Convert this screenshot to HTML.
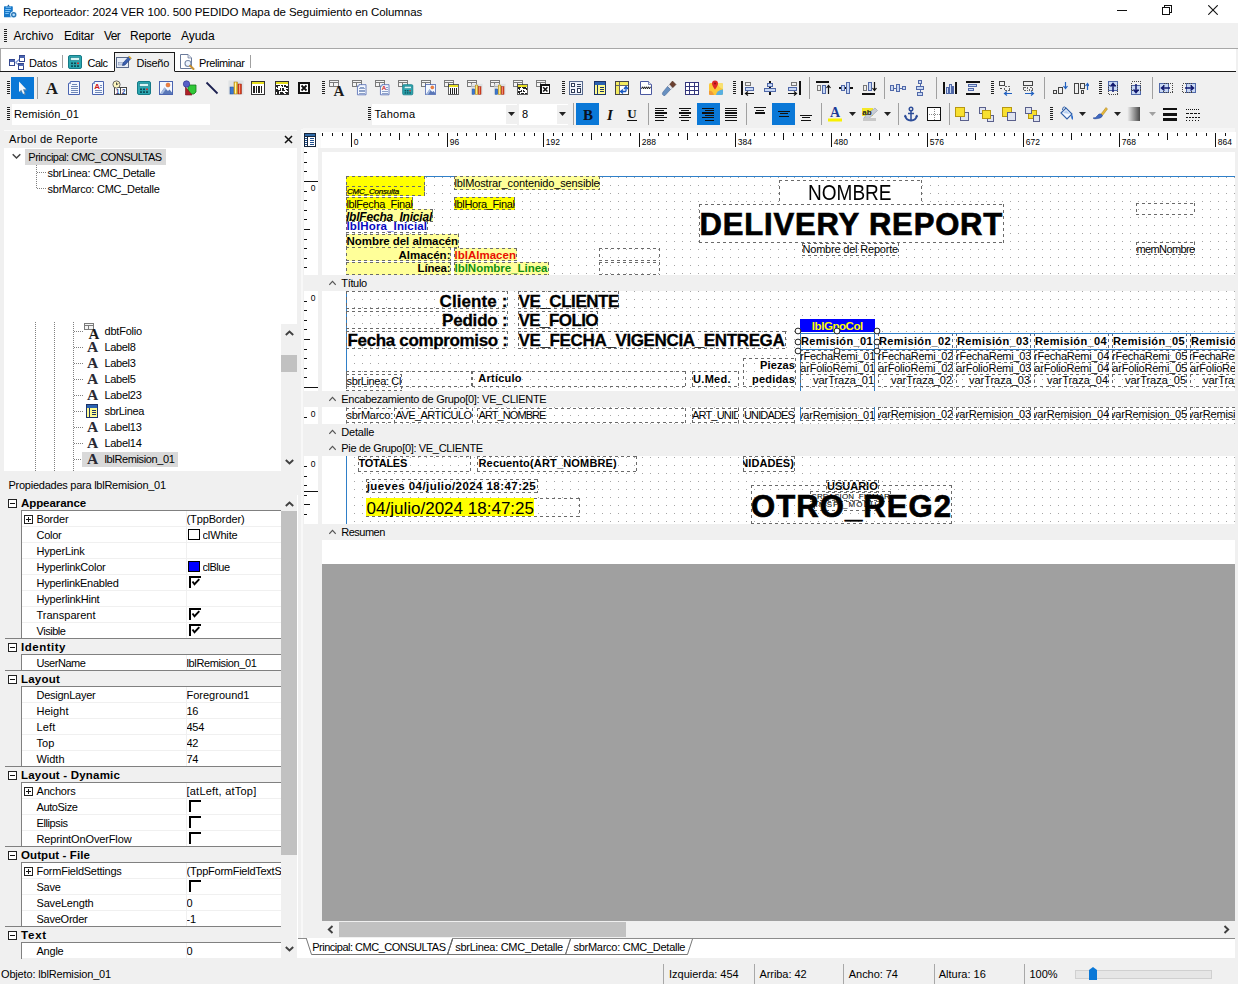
<!DOCTYPE html>
<html><head><meta charset="utf-8"><title>Reporteador</title><style>
html,body{margin:0;padding:0}
body{width:1238px;height:984px;overflow:hidden;position:relative;background:#f0f0f0;font-family:"Liberation Sans",sans-serif;font-size:11px;color:#000}
div,svg,span.t{position:absolute}
span.t{white-space:nowrap;line-height:1}
.b{font-weight:bold}.hv{-webkit-text-stroke:0.7px #000}.hv2{-webkit-text-stroke:0.3px #000}.i{font-style:italic}
.d{--c:#6a6a6a;background-image:repeating-linear-gradient(90deg,var(--c) 0 3px,transparent 3px 6px),repeating-linear-gradient(90deg,var(--c) 0 3px,transparent 3px 6px),repeating-linear-gradient(180deg,var(--c) 0 3px,transparent 3px 6px),repeating-linear-gradient(180deg,var(--c) 0 3px,transparent 3px 6px);background-size:100% 1px,100% 1px,1px 100%,1px 100%;background-position:0 0,0 100%,0 0,100% 0;background-repeat:no-repeat}
.grid{background-image:linear-gradient(90deg,#a4a4a4 1px,transparent 1px);background-size:8px 8px;-webkit-mask-image:linear-gradient(180deg,#000 1px,transparent 1px);-webkit-mask-size:8px 8px;mask-image:linear-gradient(180deg,#000 1px,transparent 1px);mask-size:8px 8px}
</style></head><body>
<div style="left:0px;top:0px;width:1238px;height:23px;background:#fff;"></div>
<svg style="left:3px;top:4px;" width="15" height="14" viewBox="0 0 15 14"><rect x="1" y="2.3" width="8.8" height="11" rx="0.6" fill="#1878c8"/><path d="M3.5 3.2L5.400 0.600L7.300 3.200Z" fill="#155a9a"/><rect x="2.800" y="2.600" width="5.200" height="1" fill="#8fd0ff"/><g fill="#7cc4fa"><rect x="2.300" y="5" width="5.500" height="1"/><rect x="2.300" y="7" width="4.500" height="1"/><rect x="2.300" y="9" width="3.500" height="1"/></g><circle cx="10.700" cy="10.800" r="3.500" fill="#eefaff"/><circle cx="10.700" cy="10.800" r="2" fill="#bfe4ff" stroke="#2a78b8" stroke-width="1.400"/></svg>
<span class="t" style="left:23px;top:7px;font-size:11.5px;color:#000;letter-spacing:-0.07px">Reporteador: 2024 VER 100. 500 PEDIDO Mapa de Seguimiento en Columnas</span>
<div style="left:1117px;top:10px;width:10px;height:1px;background:#111;"></div>
<svg style="left:1161px;top:4px;" width="12" height="12" viewBox="0 0 12 12"><g fill="none" stroke="#111" shape-rendering="crispEdges"><path d="M3.5 3.5V1.5H10.5V8.5H8.5"/><rect x="1.5" y="3.5" width="7" height="7"/></g></svg>
<svg style="left:1208px;top:5px;" width="10" height="10" viewBox="0 0 10 10"><path d="M0.3 0.3L9.7 9.7M9.7 0.3L0.3 9.7" stroke="#111" stroke-width="1.1" fill="none"/></svg>
<div style="left:0px;top:23px;width:1238px;height:25px;background:#f0f0f0;"></div>
<div style="left:4px;top:29px;width:3px;height:14px;background:repeating-linear-gradient(#222 0 1px,transparent 1px 2px);"></div>
<span class="t" style="left:13.5px;top:30px;font-size:12px;letter-spacing:-0.00px">Archivo</span>
<span class="t" style="left:64px;top:30px;font-size:12px;letter-spacing:-0.23px">Editar</span>
<span class="t" style="left:104px;top:30px;font-size:12px;letter-spacing:-0.67px">Ver</span>
<span class="t" style="left:130px;top:30px;font-size:12px;letter-spacing:-0.24px">Reporte</span>
<span class="t" style="left:181px;top:30px;font-size:12px;letter-spacing:-0.06px">Ayuda</span>
<div style="left:0px;top:48px;width:1238px;height:24px;background:#fff;border-top:1px solid #a8a8a8;border-left:1px solid #a8a8a8;box-sizing:border-box;"></div>
<div style="left:0px;top:71px;width:1238px;height:1px;background:#1a1a1a;"></div>
<div style="left:114px;top:52px;width:61px;height:20px;background:#f0f0f0;border:1px solid #1a1a1a;border-bottom:1px solid #f0f0f0;box-sizing:border-box;"></div>
<div style="left:1236px;top:49px;width:2px;height:23px;background:#f0f0f0;"></div>
<svg style="left:9px;top:54px;" width="16" height="16" viewBox="0 0 16 16"><path d="M6.5 8.5L11 5M6.5 8.500L10.5 11.500" stroke="#7a94d0" stroke-width="1.2" fill="none"/><g shape-rendering="crispEdges" fill="#fff" stroke="#33478f"><rect x="0.5" y="5.5" width="5" height="6"/><rect x="10.5" y="1.5" width="5" height="6"/><rect x="9.5" y="9.500" width="5" height="6"/></g><g shape-rendering="crispEdges" fill="#4a64b0"><rect x="1" y="6" width="5" height="2"/><rect x="11" y="2" width="5" height="2"/><rect x="10" y="10" width="5" height="2"/></g></svg>
<span class="t" style="left:29px;top:58px;letter-spacing:-0.15px">Datos</span>
<div style="left:62px;top:55px;width:1px;height:13px;background:#a0a0a0;"></div>
<svg style="left:67px;top:54px;" width="16" height="16" viewBox="0 0 16 16"><rect x="1.5" y="1.5" width="13" height="13" rx="1.5" fill="#2ba6b0" stroke="#157a86"/><rect x="3.5" y="3.5" width="9" height="3" fill="#d8f4f4" stroke="#157a86" stroke-width=".6"/><g fill="#0c4a55"><rect x="4" y="8.5" width="2" height="1.6"/><rect x="7" y="8.5" width="2" height="1.6"/><rect x="4" y="11.3" width="2" height="1.6"/><rect x="7" y="11.3" width="2" height="1.6"/></g><rect x="10" y="8.5" width="2" height="1.6" fill="#d03030"/><rect x="10" y="11.3" width="2" height="1.6" fill="#0c4a55"/></svg>
<span class="t" style="left:87.5px;top:58px;letter-spacing:-0.50px">Calc</span>
<svg style="left:116px;top:54px;" width="16" height="16" viewBox="0 0 16 16"><rect x="0.5" y="3.5" width="12" height="10" fill="#e8eef8" stroke="#5a6a8a"/><rect x="2.5" y="8.5" width="6" height="2.5" fill="#c8d4ea" stroke="#8090b0" stroke-width=".5"/><path d="M7 9L13 2.5L15 4.5L9 11L6.5 11.5Z" fill="#3a5fb0" stroke="#1f3a78" stroke-width=".6"/><path d="M13 2.5L15 4.5" stroke="#e8b020" stroke-width="1.6"/></svg>
<span class="t" style="left:136.5px;top:58px;letter-spacing:-0.29px">Diseño</span>
<svg style="left:179px;top:54px;" width="16" height="16" viewBox="0 0 16 16"><path d="M1.5 0.5H9L12.5 4V14.5H1.5Z" fill="#fff" stroke="#6a7a9a"/><path d="M9 0.5V4H12.5" fill="#dde4f0" stroke="#6a7a9a" stroke-width=".7"/><circle cx="9" cy="9.5" r="3" fill="#e4f0ff" fill-opacity=".7" stroke="#7a8aa8" stroke-width="1.1"/><path d="M11.2 11.8L14.5 15" stroke="#c89030" stroke-width="2" stroke-linecap="round"/></svg>
<span class="t" style="left:199px;top:58px;letter-spacing:-0.40px">Preliminar</span>
<div style="left:250px;top:55px;width:1px;height:13px;background:#a0a0a0;"></div>
<div style="left:0px;top:72px;width:1238px;height:57px;background:#f0f0f0;"></div>
<div style="left:7px;top:81px;width:3px;height:13px;background:repeating-linear-gradient(#222 0 1px,transparent 1px 2px);"></div>
<div style="left:11px;top:77px;width:23px;height:22px;background:#0a78d7;"></div>
<svg style="left:14px;top:80px;" width="16" height="16" viewBox="0 0 16 16"><path d="M5 1.5V12L7.3 9.8L9 14L10.6 13.3L9 9.3H12.2Z" fill="#7a8a9a" opacity=".7" transform="translate(1.2,1.2)"/><path d="M5 1.5V12L7.3 9.8L9 14L10.6 13.3L9 9.3H12.2Z" fill="#f4f8fc"/></svg>
<div style="left:37px;top:77px;width:1px;height:22px;background:#a0a0a0;"></div>
<svg style="left:44px;top:80px;" width="16" height="16" viewBox="0 0 16 16"><text x="8" y="14" font-family="Liberation Serif" font-weight="bold" font-size="17" text-anchor="middle" fill="#1a1a1a">A</text></svg>
<svg style="left:66px;top:80px;" width="16" height="16" viewBox="0 0 16 16"><path d="M4.5 1.5H13.5V14.5H2.5V3.5Z" fill="#f4f8ff" stroke="#4a64b0"/><path d="M2.5 3.5H4.5V1.5" fill="#cfdcf4" stroke="#4a64b0" stroke-width=".7"/><g stroke="#7088b8" shape-rendering="crispEdges"><path d="M6 4.5H11M4.5 6.5H12M4.5 8.5H12M4.5 10.5H12M4.5 12.5H12"/></g></svg>
<svg style="left:90px;top:80px;" width="16" height="16" viewBox="0 0 16 16"><path d="M4.5 1.5H13.5V14.5H2.5V3.5Z" fill="#f4f8ff" stroke="#4a64b0"/><path d="M2.5 3.5H4.5V1.5" fill="#cfdcf4" stroke="#4a64b0" stroke-width=".7"/><text x="7.2" y="8.6" font-family="Liberation Sans" font-weight="bold" font-size="8" text-anchor="middle" fill="#d01818">A</text><g stroke="#7088b8" shape-rendering="crispEdges"><path d="M10 5.5H12M10 7.5H12M4.5 10.5H12M4.5 12.5H12"/></g></svg>
<svg style="left:112px;top:80px;" width="16" height="16" viewBox="0 0 16 16"><g shape-rendering="crispEdges"><rect x="2.5" y="7.5" width="6" height="7" fill="#fff" stroke="#444"/><rect x="8.5" y="7.5" width="6" height="7" fill="#fff" stroke="#444"/></g><text x="5.5" y="13.6" font-family="Liberation Sans" font-weight="bold" font-size="6.5" text-anchor="middle" fill="#23408e">1</text><text x="11.5" y="13.6" font-family="Liberation Sans" font-weight="bold" font-size="6.5" text-anchor="middle" fill="#23408e">2</text><circle cx="4.5" cy="4.5" r="3.6" fill="#fff8c0" stroke="#555" stroke-width=".9"/><path d="M4.5 2.5V4.8L6.3 3.6" fill="none" stroke="#333" stroke-width=".9"/></svg>
<svg style="left:136px;top:80px;" width="16" height="16" viewBox="0 0 16 16"><rect x="1.5" y="1.5" width="13" height="13" rx="1.5" fill="#2ba6b0" stroke="#157a86"/><rect x="3.5" y="3.5" width="9" height="3" fill="#d8f4f4" stroke="#157a86" stroke-width=".6"/><g fill="#0c4a55"><rect x="4" y="8.5" width="2" height="1.6"/><rect x="7" y="8.5" width="2" height="1.6"/><rect x="4" y="11.3" width="2" height="1.6"/><rect x="7" y="11.3" width="2" height="1.6"/></g><rect x="10" y="8.5" width="2" height="1.6" fill="#d03030"/><rect x="10" y="11.3" width="2" height="1.6" fill="#0c4a55"/></svg>
<svg style="left:158px;top:80px;" width="16" height="16" viewBox="0 0 16 16"><rect x="1.5" y="1.5" width="13" height="13" fill="#f4f8ff" stroke="#4a64b0" shape-rendering="crispEdges"/><circle cx="10" cy="5" r="2" fill="#f08040" stroke="#c85820" stroke-width=".5"/><path d="M2 14L6.5 7.5L10 11L11.5 9.5L14 12.5V14Z" fill="#5a78b8"/><path d="M2 14L6.5 7.5L8 9L4.5 14Z" fill="#a8bce0"/></svg>
<svg style="left:182px;top:80px;" width="16" height="16" viewBox="0 0 16 16"><path d="M6 5H14V12L12 14H6Z" fill="#30c838" stroke="#187820" stroke-width=".8"/><path d="M3.5 7V15H10Z" fill="#b02028" stroke="#701018" stroke-width=".6"/><circle cx="4.5" cy="4" r="3.2" fill="#5860c8" stroke="#303890" stroke-width=".7"/></svg>
<svg style="left:204px;top:80px;" width="16" height="16" viewBox="0 0 16 16"><path d="M2.5 2.5L13.5 13.5" stroke="#1c2050" stroke-width="1.8"/></svg>
<svg style="left:228px;top:80px;" width="16" height="16" viewBox="0 0 16 16"><rect x="0.5" y="0.5" width="15" height="14" fill="#d4d8dc" opacity=".6"/><rect x="2" y="7" width="3.5" height="7" fill="#3c78d0" stroke="#1c4890" stroke-width=".5"/><rect x="6" y="2" width="3.5" height="12" fill="#e8c030" stroke="#a07810" stroke-width=".5"/><rect x="10" y="4" width="3.5" height="10" fill="#d84020" stroke="#902010" stroke-width=".5"/><rect x="7" y="2.5" width="1" height="11" fill="#fff4b0"/><rect x="11" y="4.5" width="1" height="9" fill="#f8a080"/></svg>
<svg style="left:250px;top:80px;" width="16" height="16" viewBox="0 0 16 16"><g shape-rendering="crispEdges"><rect x="1.5" y="1.5" width="13" height="13" fill="#fff" stroke="#333"/><rect x="2" y="2" width="12" height="2" fill="#e8e020"/><path d="M4 6V13M6.5 6V13M9 6V13M11.5 6V13" stroke="#222" stroke-width="1.4"/></g></svg>
<svg style="left:274px;top:80px;" width="16" height="16" viewBox="0 0 16 16"><g shape-rendering="crispEdges"><rect x="1.5" y="1.5" width="13" height="13" fill="#fff" stroke="#333"/><rect x="2" y="2" width="12" height="2" fill="#e8e020"/><path d="M2 5H6V6H4V8H3V7H2ZM7 5H9V7H8V6H7ZM10 5H12V6H14V8H12V7H10ZM2 9H4V10H6V8H7V11H5V12H2ZM8 8H10V10H11V11H8ZM12 9H14V11H13V10H12ZM3 12H5V14H3ZM6 12H9V13H10V14H6ZM11 12H14V14H12V13H11Z" fill="#222"/></g></svg>
<svg style="left:296px;top:80px;" width="16" height="16" viewBox="0 0 16 16"><g shape-rendering="crispEdges"><rect x="3" y="3" width="10" height="10" fill="#fff" stroke="#111" stroke-width="1.6"/></g><path d="M5.5 5.5L10.5 10.5M10.5 5.5L5.5 10.5" stroke="#111" stroke-width="1.8"/></svg>
<div style="left:322px;top:81px;width:3px;height:13px;background:repeating-linear-gradient(#222 0 1px,transparent 1px 2px);"></div>
<svg style="left:329px;top:80px;" width="16" height="16" viewBox="0 0 16 16"><g shape-rendering="crispEdges" fill="#f4f4f4" stroke="#7a7a7a"><rect x="0.5" y="0.5" width="9" height="6"/><path d="M0.5 2.5H9.5M4.5 2.5V6.5" fill="none"/></g><text x="10" y="15.5" font-family="Liberation Serif" font-weight="bold" font-size="15" text-anchor="middle" fill="#1a1a1a">A</text></svg>
<svg style="left:352px;top:80px;" width="16" height="16" viewBox="0 0 16 16"><g shape-rendering="crispEdges" fill="#f4f4f4" stroke="#7a7a7a"><rect x="0.5" y="0.5" width="9" height="6"/><path d="M0.5 2.5H9.5M4.5 2.5V6.5" fill="none"/></g><g transform="translate(3.5,3.5) scale(0.78)"><path d="M4.5 1.5H13.5V14.5H2.5V3.5Z" fill="#f4f8ff" stroke="#4a64b0"/><path d="M2.5 3.5H4.5V1.5" fill="#cfdcf4" stroke="#4a64b0" stroke-width=".7"/><g stroke="#7088b8" shape-rendering="crispEdges"><path d="M6 4.5H11M4.5 6.5H12M4.5 8.5H12M4.5 10.5H12M4.5 12.5H12"/></g></g></svg>
<svg style="left:375px;top:80px;" width="16" height="16" viewBox="0 0 16 16"><g shape-rendering="crispEdges" fill="#f4f4f4" stroke="#7a7a7a"><rect x="0.5" y="0.5" width="9" height="6"/><path d="M0.5 2.5H9.5M4.5 2.5V6.5" fill="none"/></g><g transform="translate(3.5,3.5) scale(0.78)"><path d="M4.5 1.5H13.5V14.5H2.5V3.5Z" fill="#f4f8ff" stroke="#4a64b0"/><path d="M2.5 3.5H4.5V1.5" fill="#cfdcf4" stroke="#4a64b0" stroke-width=".7"/><text x="7.2" y="8.6" font-family="Liberation Sans" font-weight="bold" font-size="8" text-anchor="middle" fill="#d01818">A</text><g stroke="#7088b8" shape-rendering="crispEdges"><path d="M10 5.5H12M10 7.5H12M4.5 10.5H12M4.5 12.5H12"/></g></g></svg>
<svg style="left:398px;top:80px;" width="16" height="16" viewBox="0 0 16 16"><g shape-rendering="crispEdges" fill="#f4f4f4" stroke="#7a7a7a"><rect x="0.5" y="0.5" width="9" height="6"/><path d="M0.5 2.5H9.5M4.5 2.5V6.5" fill="none"/></g><g transform="translate(3.5,3.5) scale(0.78)"><rect x="1.5" y="1.5" width="13" height="13" rx="1.5" fill="#2ba6b0" stroke="#157a86"/><rect x="3.5" y="3.5" width="9" height="3" fill="#d8f4f4" stroke="#157a86" stroke-width=".6"/><g fill="#0c4a55"><rect x="4" y="8.5" width="2" height="1.6"/><rect x="7" y="8.5" width="2" height="1.6"/><rect x="4" y="11.3" width="2" height="1.6"/><rect x="7" y="11.3" width="2" height="1.6"/></g><rect x="10" y="8.5" width="2" height="1.6" fill="#d03030"/><rect x="10" y="11.3" width="2" height="1.6" fill="#0c4a55"/></g></svg>
<svg style="left:421px;top:80px;" width="16" height="16" viewBox="0 0 16 16"><g shape-rendering="crispEdges" fill="#f4f4f4" stroke="#7a7a7a"><rect x="0.5" y="0.5" width="9" height="6"/><path d="M0.5 2.5H9.5M4.5 2.5V6.5" fill="none"/></g><g transform="translate(3.5,3.5) scale(0.78)"><rect x="1.5" y="1.5" width="13" height="13" fill="#f4f8ff" stroke="#4a64b0" shape-rendering="crispEdges"/><circle cx="10" cy="5" r="2" fill="#f08040" stroke="#c85820" stroke-width=".5"/><path d="M2 14L6.5 7.5L10 11L11.5 9.5L14 12.5V14Z" fill="#5a78b8"/><path d="M2 14L6.5 7.5L8 9L4.5 14Z" fill="#a8bce0"/></g></svg>
<svg style="left:444px;top:80px;" width="16" height="16" viewBox="0 0 16 16"><g shape-rendering="crispEdges" fill="#f4f4f4" stroke="#7a7a7a"><rect x="0.5" y="0.5" width="9" height="6"/><path d="M0.5 2.5H9.5M4.5 2.5V6.5" fill="none"/></g><g transform="translate(3.5,3.5) scale(0.78)"><g shape-rendering="crispEdges"><rect x="1.5" y="1.5" width="13" height="13" fill="#fff" stroke="#333"/><rect x="2" y="2" width="12" height="2" fill="#e8e020"/><path d="M4 6V13M6.5 6V13M9 6V13M11.5 6V13" stroke="#222" stroke-width="1.4"/></g></g></svg>
<svg style="left:467px;top:80px;" width="16" height="16" viewBox="0 0 16 16"><g shape-rendering="crispEdges" fill="#f4f4f4" stroke="#7a7a7a"><rect x="0.5" y="0.5" width="9" height="6"/><path d="M0.5 2.5H9.5M4.5 2.5V6.5" fill="none"/></g><g transform="translate(3.5,3.5) scale(0.78)"><rect x="0.5" y="0.5" width="15" height="14" fill="#d4d8dc" opacity=".6"/><rect x="2" y="7" width="3.5" height="7" fill="#3c78d0" stroke="#1c4890" stroke-width=".5"/><rect x="6" y="2" width="3.5" height="12" fill="#e8c030" stroke="#a07810" stroke-width=".5"/><rect x="10" y="4" width="3.5" height="10" fill="#d84020" stroke="#902010" stroke-width=".5"/><rect x="7" y="2.5" width="1" height="11" fill="#fff4b0"/><rect x="11" y="4.5" width="1" height="9" fill="#f8a080"/></g></svg>
<svg style="left:490px;top:80px;" width="16" height="16" viewBox="0 0 16 16"><g shape-rendering="crispEdges" fill="#f4f4f4" stroke="#7a7a7a"><rect x="0.5" y="0.5" width="9" height="6"/><path d="M0.5 2.5H9.5M4.5 2.5V6.5" fill="none"/></g><g transform="translate(3.5,3.5) scale(0.78)"><rect x="0.5" y="0.5" width="15" height="14" fill="#d4d8dc" opacity=".6"/><rect x="2" y="7" width="3.5" height="7" fill="#3c78d0" stroke="#1c4890" stroke-width=".5"/><rect x="6" y="2" width="3.5" height="12" fill="#e8c030" stroke="#a07810" stroke-width=".5"/><rect x="10" y="4" width="3.5" height="10" fill="#d84020" stroke="#902010" stroke-width=".5"/><rect x="7" y="2.5" width="1" height="11" fill="#fff4b0"/><rect x="11" y="4.5" width="1" height="9" fill="#f8a080"/></g></svg>
<svg style="left:513px;top:80px;" width="16" height="16" viewBox="0 0 16 16"><g shape-rendering="crispEdges" fill="#f4f4f4" stroke="#7a7a7a"><rect x="0.5" y="0.5" width="9" height="6"/><path d="M0.5 2.5H9.5M4.5 2.5V6.5" fill="none"/></g><g transform="translate(3.5,3.5) scale(0.78)"><g shape-rendering="crispEdges"><rect x="1.5" y="1.5" width="13" height="13" fill="#fff" stroke="#333"/><rect x="2" y="2" width="12" height="2" fill="#e8e020"/><path d="M2 5H6V6H4V8H3V7H2ZM7 5H9V7H8V6H7ZM10 5H12V6H14V8H12V7H10ZM2 9H4V10H6V8H7V11H5V12H2ZM8 8H10V10H11V11H8ZM12 9H14V11H13V10H12ZM3 12H5V14H3ZM6 12H9V13H10V14H6ZM11 12H14V14H12V13H11Z" fill="#222"/></g></g></svg>
<svg style="left:536px;top:80px;" width="16" height="16" viewBox="0 0 16 16"><g shape-rendering="crispEdges" fill="#f4f4f4" stroke="#7a7a7a"><rect x="0.5" y="0.5" width="9" height="6"/><path d="M0.5 2.5H9.5M4.5 2.5V6.5" fill="none"/></g><g transform="translate(2.5,2.5) scale(0.85)"><g shape-rendering="crispEdges"><rect x="3" y="3" width="10" height="10" fill="#fff" stroke="#111" stroke-width="1.6"/></g><path d="M5.5 5.5L10.5 10.5M10.5 5.5L5.5 10.5" stroke="#111" stroke-width="1.8"/></g></svg>
<div style="left:562px;top:81px;width:3px;height:13px;background:repeating-linear-gradient(#222 0 1px,transparent 1px 2px);"></div>
<svg style="left:568px;top:80px;" width="16" height="16" viewBox="0 0 16 16"><g shape-rendering="crispEdges"><rect x="1.5" y="1.5" width="13" height="13" fill="#eef2fa" stroke="#56688c"/><g fill="#fff" stroke="#303c58"><rect x="3.5" y="3.5" width="3" height="3"/><rect x="3.5" y="9.5" width="3" height="3"/><rect x="9.5" y="8.5" width="3" height="4"/></g><path d="M8.5 4.5H12.5M8.5 6.5H12.5" stroke="#303c58"/></g></svg>
<svg style="left:592px;top:80px;" width="16" height="16" viewBox="0 0 16 16"><g shape-rendering="crispEdges" transform="translate(2,1)"><rect x="0.5" y="0.5" width="11" height="13" fill="#fffc90" stroke="#1c3468"/><rect x="1" y="1" width="10" height="3" fill="#2c62b0"/><path d="M3.5 4V13" stroke="#1c3468"/><path d="M5.500 6.500H10M5.500 8.500H10M5.500 10.500H10" stroke="#1c3468"/></g></svg>
<svg style="left:614px;top:80px;" width="16" height="16" viewBox="0 0 16 16"><g shape-rendering="crispEdges"><rect x="1.5" y="1.5" width="13" height="13" fill="#fff" stroke="#444"/><rect x="2" y="2" width="12" height="3" fill="#f4ec60"/><rect x="2" y="2" width="3" height="12" fill="#f4ec60"/><path d="M5.5 2V14M2 5.5H14" stroke="#666"/></g><path d="M7 11.5H12M12 11.5V7M10 9L12 6.5L14 9M9 9.5L6.5 11.5L9 13.5" fill="none" stroke="#1858c0" stroke-width="1.3"/></svg>
<svg style="left:638px;top:80px;" width="16" height="16" viewBox="0 0 16 16"><path d="M2.5 1.5H10.5L13.5 4.5V14.5H2.5Z" fill="#fff" stroke="#4a58a0"/><path d="M10.5 1.500V4.500H13.500" fill="#dde4f0" stroke="#4a58a0" stroke-width=".7"/><path d="M3.500 8.800L4.500 6.800L5.500 8.800L6.500 6.800L7.500 8.800L8.500 6.800L9.500 8.800L10.500 6.800L11.500 8.800L12.500 6.800" fill="none" stroke="#111" stroke-width="1"/></svg>
<svg style="left:661px;top:80px;" width="16" height="16" viewBox="0 0 16 16"><path d="M8.5 4.5L11.5 1L15 4.5L11.5 8Z" fill="#6a4030" stroke="#482818" stroke-width=".5"/><path d="M6.5 6.5L8.5 4.5L11.5 8L9.5 9.5Z" fill="#e8e8ec" stroke="#9098a8" stroke-width=".5"/><path d="M6.5 6.5L9.5 9.5L4 15.5Q2.5 16 1.5 14.5Q1 13 2 12Z" fill="#6890c0" stroke="#406090" stroke-width=".5"/></svg>
<svg style="left:684px;top:80px;" width="16" height="16" viewBox="0 0 16 16"><g shape-rendering="crispEdges"><rect x="1.5" y="2.5" width="13" height="12" fill="#fff" stroke="#34367c"/><path d="M5.5 2.5V14.500M10.5 2.500V14.500M1.500 6.500H14.500M1.500 10.500H14.500" stroke="#34367c" fill="none"/></g></svg>
<svg style="left:708px;top:80px;" width="16" height="16" viewBox="0 0 16 16"><rect x="1" y="3" width="14" height="12" rx="1.5" fill="#fcc838"/><path d="M9 3H13.5Q15 3 15 4.5V9Q11 8 9 3Z" fill="#f8e070"/><path d="M8 15Q9 10 15 9.5V13.5Q15 15 13.5 15Z" fill="#58b0e0"/><path d="M1 11Q4 10 6 15H2.5Q1 15 1 13.5Z" fill="#f09838"/><path d="M7 0.5A3 3 0 0 1 10 3.5Q10 5.5 7 9.5Q4 5.5 4 3.5A3 3 0 0 1 7 0.5Z" fill="#e02828"/><circle cx="7" cy="3.5" r="1" fill="#901010"/></svg>
<div style="left:733px;top:81px;width:3px;height:13px;background:repeating-linear-gradient(#222 0 1px,transparent 1px 2px);"></div>
<svg style="left:740px;top:80px;" width="16" height="16" viewBox="0 0 16 16"><g shape-rendering="crispEdges"><rect x="1" y="1" width="2" height="14" fill="#111"/><rect x="5.5" y="2.5" width="5" height="3" fill="#eee" stroke="#777"/><rect x="5.5" y="7.5" width="8" height="3" fill="#c8d8f4" stroke="#5068a8"/></g><path d="M14 13.5H6M8 11.5L5.5 13.5L8 15.5" fill="none" stroke="#111" stroke-width="1.2"/></svg>
<svg style="left:762px;top:80px;" width="16" height="16" viewBox="0 0 16 16"><g shape-rendering="crispEdges"><path d="M8 1V15" stroke="#111" stroke-width="2"/><rect x="5.5" y="3.5" width="5" height="3" fill="#c8d8f4" stroke="#5068a8"/><rect x="2.5" y="8.5" width="11" height="3" fill="#c8d8f4" stroke="#5068a8"/></g></svg>
<svg style="left:786px;top:80px;" width="16" height="16" viewBox="0 0 16 16"><g shape-rendering="crispEdges"><rect x="13" y="1" width="2" height="14" fill="#111"/><rect x="5.5" y="2.5" width="5" height="3" fill="#eee" stroke="#777"/><rect x="2.5" y="7.5" width="8" height="3" fill="#c8d8f4" stroke="#5068a8"/></g><path d="M2 13.5H10M8 11.5L10.5 13.5L8 15.5" fill="none" stroke="#111" stroke-width="1.2"/></svg>
<div style="left:809px;top:77px;width:1px;height:22px;background:#a0a0a0;"></div>
<svg style="left:815px;top:80px;" width="16" height="16" viewBox="0 0 16 16"><g shape-rendering="crispEdges"><rect x="1" y="1" width="13" height="2" fill="#111"/><rect x="2.5" y="5.5" width="3" height="5" fill="#eee" stroke="#777"/><rect x="7.5" y="5.5" width="3" height="8" fill="#c8d8f4" stroke="#5068a8"/></g><path d="M13.5 14V6M11.5 8L13.5 5.5L15.5 8" fill="none" stroke="#111" stroke-width="1.2"/></svg>
<svg style="left:838px;top:80px;" width="16" height="16" viewBox="0 0 16 16"><g shape-rendering="crispEdges"><path d="M1 8H15" stroke="#111" stroke-width="2"/><rect x="3.5" y="5.5" width="3" height="5" fill="#c8d8f4" stroke="#5068a8"/><rect x="8.5" y="2.5" width="3" height="11" fill="#c8d8f4" stroke="#5068a8"/></g></svg>
<svg style="left:861px;top:80px;" width="16" height="16" viewBox="0 0 16 16"><g shape-rendering="crispEdges"><rect x="1" y="13" width="13" height="2" fill="#111"/><rect x="2.5" y="5.5" width="3" height="5" fill="#eee" stroke="#777"/><rect x="7.5" y="2.5" width="3" height="8" fill="#c8d8f4" stroke="#5068a8"/></g><path d="M13.5 2V10M11.5 8L13.5 10.5L15.5 8" fill="none" stroke="#111" stroke-width="1.2"/></svg>
<div style="left:884px;top:77px;width:1px;height:22px;background:#a0a0a0;"></div>
<svg style="left:890px;top:80px;" width="16" height="16" viewBox="0 0 16 16"><g shape-rendering="crispEdges"><path d="M1 8H15" stroke="#5068a8"/><rect x="0.5" y="5.5" width="3" height="5" fill="#c8d8f4" stroke="#5068a8"/><rect x="6.500" y="4.5" width="3" height="7" fill="#c8d8f4" stroke="#5068a8"/><rect x="12.5" y="6.5" width="3" height="3" fill="#c8d8f4" stroke="#5068a8"/></g></svg>
<svg style="left:912px;top:80px;" width="16" height="16" viewBox="0 0 16 16"><g shape-rendering="crispEdges"><path d="M8 1V15" stroke="#5068a8"/><rect x="6.5" y="0.5" width="3" height="3" fill="#c8d8f4" stroke="#5068a8"/><rect x="4.5" y="6.5" width="7" height="3" fill="#c8d8f4" stroke="#5068a8"/><rect x="5.5" y="12.5" width="5" height="3" fill="#c8d8f4" stroke="#5068a8"/></g></svg>
<div style="left:936px;top:77px;width:1px;height:22px;background:#a0a0a0;"></div>
<svg style="left:942px;top:80px;" width="16" height="16" viewBox="0 0 16 16"><g shape-rendering="crispEdges"><rect x="1" y="2" width="2" height="12" fill="#111"/><rect x="13" y="2" width="2" height="12" fill="#111"/><rect x="4.500" y="7.5" width="2" height="6" fill="#c8d8f4" stroke="#5068a8"/><rect x="7.5" y="4.5" width="2" height="9" fill="#c8d8f4" stroke="#5068a8"/><rect x="10.5" y="6.5" width="1" height="7" fill="#c8d8f4" stroke="#5068a8"/></g></svg>
<svg style="left:965px;top:80px;" width="16" height="16" viewBox="0 0 16 16"><g shape-rendering="crispEdges"><rect x="1" y="1" width="14" height="2" fill="#111"/><rect x="1" y="13" width="14" height="2" fill="#111"/><rect x="3.500" y="4.5" width="8" height="2" fill="#c8d8f4" stroke="#5068a8"/><rect x="3.5" y="8.5" width="5" height="2" fill="#c8d8f4" stroke="#5068a8"/></g></svg>
<div style="left:991px;top:81px;width:3px;height:13px;background:repeating-linear-gradient(#222 0 1px,transparent 1px 2px);"></div>
<svg style="left:998px;top:80px;" width="16" height="16" viewBox="0 0 16 16"><g shape-rendering="crispEdges" fill="none"><rect x="1.5" y="1.5" width="5" height="4" stroke="#444"/><rect x="6.5" y="6.5" width="5" height="4" stroke="#666" stroke-dasharray="2 1"/></g><path d="M14 13.500H7M9 11.5L6.500 13.5L9 15.500" fill="none" stroke="#2060c0" stroke-width="1.2"/><path d="M2 8.500H4" stroke="#444"/></svg>
<svg style="left:1021px;top:80px;" width="16" height="16" viewBox="0 0 16 16"><g shape-rendering="crispEdges" fill="none"><rect x="2.5" y="1.5" width="9" height="4" stroke="#444"/><rect x="2.5" y="7.5" width="4" height="3" stroke="#666" stroke-dasharray="2 1"/><rect x="8.5" y="7.5" width="3" height="3" stroke="#666" stroke-dasharray="2 1"/></g><path d="M4 13.500H12M10 11.5L12.500 13.5L10 15.500" fill="none" stroke="#2060c0" stroke-width="1.2"/></svg>
<div style="left:1044px;top:77px;width:1px;height:22px;background:#a0a0a0;"></div>
<svg style="left:1052px;top:80px;" width="16" height="16" viewBox="0 0 16 16"><g shape-rendering="crispEdges" fill="none" stroke="#444"><rect x="1.5" y="10.5" width="3" height="3"/><rect x="6.5" y="7.5" width="4" height="6"/></g><path d="M13.500 2V8M11.5 6L13.5 8.500L15.500 6" fill="none" stroke="#2060c0" stroke-width="1.2"/></svg>
<svg style="left:1073px;top:80px;" width="16" height="16" viewBox="0 0 16 16"><g shape-rendering="crispEdges" fill="none" stroke="#444"><rect x="1.5" y="3.5" width="4" height="10"/><rect x="7.5" y="3.5" width="4" height="5"/><rect x="8.5" y="10.5" width="2" height="3"/></g><path d="M14.500 10V4M12.5 6L14.5 3.500L16 6" fill="none" stroke="#2060c0" stroke-width="1.2"/></svg>
<div style="left:1099px;top:81px;width:3px;height:13px;background:repeating-linear-gradient(#222 0 1px,transparent 1px 2px);"></div>
<svg style="left:1105px;top:80px;" width="16" height="16" viewBox="0 0 16 16"><g shape-rendering="crispEdges"><rect x="3.5" y="1.5" width="9" height="9" fill="#c8d8f4" stroke="#5068a8"/><rect x="3.5" y="5.5" width="9" height="9" fill="none" stroke="#444" stroke-dasharray="1 1"/></g><path d="M8 12V4M5.500 6.500L8 3.500L10.500 6.500" fill="none" stroke="#101870" stroke-width="1.5"/></svg>
<svg style="left:1128px;top:80px;" width="16" height="16" viewBox="0 0 16 16"><g shape-rendering="crispEdges"><rect x="3.5" y="5.5" width="9" height="9" fill="#c8d8f4" stroke="#5068a8"/><rect x="3.5" y="1.5" width="9" height="9" fill="none" stroke="#444" stroke-dasharray="1 1"/></g><path d="M8 4V12M5.500 9.500L8 12.500L10.500 9.500" fill="none" stroke="#101870" stroke-width="1.5"/></svg>
<div style="left:1152px;top:77px;width:1px;height:22px;background:#a0a0a0;"></div>
<svg style="left:1158px;top:80px;" width="16" height="16" viewBox="0 0 16 16"><g shape-rendering="crispEdges"><rect x="1.5" y="3.5" width="9" height="9" fill="#c8d8f4" stroke="#5068a8"/><rect x="5.5" y="3.5" width="9" height="9" fill="none" stroke="#444" stroke-dasharray="1 1"/></g><path d="M12 8H4M6.500 5.500L3.500 8L6.500 10.500" fill="none" stroke="#101870" stroke-width="1.5"/></svg>
<svg style="left:1181px;top:80px;" width="16" height="16" viewBox="0 0 16 16"><g shape-rendering="crispEdges"><rect x="5.5" y="3.5" width="9" height="9" fill="#c8d8f4" stroke="#5068a8"/><rect x="1.5" y="3.5" width="9" height="9" fill="none" stroke="#444" stroke-dasharray="1 1"/></g><path d="M4 8H12M9.500 5.500L12.500 8L9.500 10.500" fill="none" stroke="#101870" stroke-width="1.5"/></svg>
<div style="left:7px;top:107px;width:3px;height:13px;background:repeating-linear-gradient(#222 0 1px,transparent 1px 2px);"></div>
<div style="left:12px;top:104px;width:198px;height:21px;background:#fff;"></div>
<span class="t" style="left:14px;top:109px;letter-spacing:0.07px">Remisión_01</span>
<div style="left:368px;top:107px;width:3px;height:13px;background:repeating-linear-gradient(#222 0 1px,transparent 1px 2px);"></div>
<div style="left:372px;top:104px;width:145px;height:21px;background:#fff;"></div>
<div style="left:506px;top:105px;width:11px;height:19px;background:#f0f0f0;"></div>
<span class="t" style="left:374.5px;top:109px;letter-spacing:0.28px">Tahoma</span>
<svg style="left:508px;top:112px;" width="7" height="4" viewBox="0 0 7 4"><path d="M0 0H7L3.5 4Z" fill="#222"/></svg>
<div style="left:519px;top:104px;width:49px;height:21px;background:#fff;"></div>
<div style="left:557px;top:105px;width:11px;height:19px;background:#f0f0f0;"></div>
<span class="t" style="left:522px;top:109px;">8</span>
<svg style="left:559px;top:112px;" width="7" height="4" viewBox="0 0 7 4"><path d="M0 0H7L3.5 4Z" fill="#222"/></svg>
<div style="left:573px;top:103px;width:1px;height:22px;background:#a0a0a0;"></div>
<div style="left:576px;top:103px;width:23px;height:22px;background:#0a78d7;"></div>
<svg style="left:580px;top:106px;" width="16" height="16" viewBox="0 0 16 16"><text x="8" y="13.5" font-family="Liberation Serif" font-weight="bold" font-size="15" text-anchor="middle" fill="#0a1020">B</text></svg>
<svg style="left:602px;top:106px;" width="16" height="16" viewBox="0 0 16 16"><text x="8" y="13.5" font-family="Liberation Serif" font-weight="bold" font-style="italic" font-size="15" text-anchor="middle" fill="#111">I</text></svg>
<svg style="left:624px;top:106px;" width="16" height="16" viewBox="0 0 16 16"><text x="8" y="12" font-family="Liberation Serif" font-weight="bold" font-size="13" text-anchor="middle" fill="#111">U</text><rect x="3" y="14" width="10" height="1" fill="#111"/></svg>
<div style="left:648px;top:103px;width:1px;height:22px;background:#a0a0a0;"></div>
<svg style="left:653px;top:106px;" width="16" height="16" viewBox="0 0 16 16"><g shape-rendering="crispEdges" fill="#111"><rect x="2" y="1.5" width="12" height="1.3"/><rect x="2" y="3.9" width="9" height="1.3"/><rect x="2" y="6.3" width="12" height="1.3"/><rect x="2" y="8.7" width="9" height="1.3"/><rect x="2" y="11.1" width="12" height="1.3"/><rect x="2" y="13.5" width="9" height="1.3"/></g></svg>
<svg style="left:677px;top:106px;" width="16" height="16" viewBox="0 0 16 16"><g shape-rendering="crispEdges" fill="#111"><rect x="2.0" y="1.5" width="12" height="1.3"/><rect x="4.0" y="3.9" width="8" height="1.3"/><rect x="2.0" y="6.3" width="12" height="1.3"/><rect x="4.0" y="8.7" width="8" height="1.3"/><rect x="2.0" y="11.1" width="12" height="1.3"/><rect x="4.0" y="13.5" width="8" height="1.3"/></g></svg>
<div style="left:697px;top:103px;width:23px;height:22px;background:#0a78d7;"></div>
<svg style="left:700px;top:106px;" width="16" height="16" viewBox="0 0 16 16"><g shape-rendering="crispEdges" fill="#111"><rect x="2" y="1.5" width="12" height="1.3"/><rect x="5" y="3.9" width="9" height="1.3"/><rect x="2" y="6.3" width="12" height="1.3"/><rect x="5" y="8.7" width="9" height="1.3"/><rect x="2" y="11.1" width="12" height="1.3"/><rect x="5" y="13.5" width="9" height="1.3"/></g></svg>
<svg style="left:723px;top:106px;" width="16" height="16" viewBox="0 0 16 16"><g shape-rendering="crispEdges" fill="#111"><rect x="2" y="1.5" width="12" height="1.3"/><rect x="2" y="3.9" width="12" height="1.3"/><rect x="2" y="6.3" width="12" height="1.3"/><rect x="2" y="8.7" width="12" height="1.3"/><rect x="2" y="11.1" width="12" height="1.3"/><rect x="2" y="13.5" width="12" height="1.3"/></g></svg>
<div style="left:746px;top:103px;width:1px;height:22px;background:#a0a0a0;"></div>
<svg style="left:752px;top:106px;" width="16" height="16" viewBox="0 0 16 16"><g shape-rendering="crispEdges" fill="#111"><rect x="2.0" y="1.0" width="12" height="1.3"/><rect x="4.0" y="3.6" width="8" height="1.3"/><rect x="3.0" y="6.2" width="10" height="1.3"/></g></svg>
<div style="left:772px;top:103px;width:23px;height:22px;background:#0a78d7;"></div>
<svg style="left:776px;top:106px;" width="16" height="16" viewBox="0 0 16 16"><g shape-rendering="crispEdges" fill="#111"><rect x="2.0" y="4.5" width="12" height="1.3"/><rect x="4.0" y="7.1" width="8" height="1.3"/><rect x="3.0" y="9.7" width="10" height="1.3"/></g></svg>
<svg style="left:798px;top:106px;" width="16" height="16" viewBox="0 0 16 16"><g shape-rendering="crispEdges" fill="#111"><rect x="2.0" y="8.5" width="12" height="1.3"/><rect x="4.0" y="11.1" width="8" height="1.3"/><rect x="3.0" y="13.7" width="10" height="1.3"/></g></svg>
<div style="left:821px;top:103px;width:1px;height:22px;background:#a0a0a0;"></div>
<svg style="left:827px;top:106px;" width="16" height="16" viewBox="0 0 16 16"><text x="8" y="11" font-family="Liberation Serif" font-weight="bold" font-size="14" text-anchor="middle" fill="#1c3c98">A</text><rect x="1" y="12.5" width="14" height="3" fill="#f8f000"/></svg>
<svg style="left:849px;top:112px;" width="7" height="4" viewBox="0 0 7 4"><path d="M0 0H7L3.5 4Z" fill="#222"/></svg>
<svg style="left:862px;top:106px;" width="16" height="16" viewBox="0 0 16 16"><rect x="0" y="2" width="11" height="8" fill="#f4e828"/><path d="M2 12L4 9L13 2L15.500 4.500L7 12.500Z" fill="#c8ccd4" stroke="#8890a0" stroke-width=".5"/><text x="5" y="9" font-family="Liberation Sans" font-weight="bold" font-size="8" text-anchor="middle" fill="#222">ab</text><rect x="1" y="12" width="13" height="3" fill="#c8c8c8"/></svg>
<svg style="left:884px;top:112px;" width="7" height="4" viewBox="0 0 7 4"><path d="M0 0H7L3.5 4Z" fill="#222"/></svg>
<div style="left:898px;top:103px;width:1px;height:22px;background:#a0a0a0;"></div>
<svg style="left:903px;top:106px;" width="16" height="16" viewBox="0 0 16 16"><circle cx="8" cy="3" r="1.8" fill="none" stroke="#2c4c98" stroke-width="1.4"/><path d="M8 5V14M5 7.500H11" stroke="#2c4c98" stroke-width="1.5" fill="none"/><path d="M2 9.500Q3 14.500 8 14.500Q13 14.500 14 9.500" fill="none" stroke="#2c4c98" stroke-width="1.8"/><path d="M1 11L2 8.500L4 10.500ZM15 11L14 8.500L12 10.500Z" fill="#2c4c98"/></svg>
<svg style="left:926px;top:106px;" width="16" height="16" viewBox="0 0 16 16"><g shape-rendering="crispEdges"><rect x="1.5" y="1.5" width="13" height="13" fill="#fff" stroke="#111"/><path d="M8.500 3V14M3 8.500H14" stroke="#888" stroke-dasharray="1 1"/></g></svg>
<div style="left:949px;top:103px;width:1px;height:22px;background:#a0a0a0;"></div>
<svg style="left:954px;top:106px;" width="16" height="16" viewBox="0 0 16 16"><g shape-rendering="crispEdges"><rect x="6.5" y="6.5" width="8" height="8" fill="#e0e4f0" stroke="#5a608c"/><rect x="1.5" y="1.5" width="9" height="9" fill="#f8e030" stroke="#b89810"/></g></svg>
<svg style="left:978px;top:106px;" width="16" height="16" viewBox="0 0 16 16"><g shape-rendering="crispEdges"><rect x="1.5" y="1.5" width="6" height="6" fill="#e0e4f0" stroke="#5a608c"/><rect x="9.5" y="9.5" width="6" height="6" fill="#e0e4f0" stroke="#5a608c"/><rect x="4.5" y="4.5" width="8" height="8" fill="#f8e030" stroke="#b89810"/></g></svg>
<svg style="left:1001px;top:106px;" width="16" height="16" viewBox="0 0 16 16"><g shape-rendering="crispEdges"><rect x="1.5" y="1.5" width="9" height="9" fill="#f8e030" stroke="#b89810"/><rect x="6.5" y="6.5" width="8" height="8" fill="#e0e4f0" stroke="#5a608c"/></g></svg>
<svg style="left:1024px;top:106px;" width="16" height="16" viewBox="0 0 16 16"><g shape-rendering="crispEdges"><rect x="4.5" y="4.5" width="8" height="8" fill="#f8e030" stroke="#b89810"/><rect x="1.5" y="1.5" width="6" height="6" fill="#e0e4f0" stroke="#5a608c"/><rect x="9.5" y="9.500" width="6" height="6" fill="#e0e4f0" stroke="#5a608c"/></g></svg>
<div style="left:1050px;top:107px;width:3px;height:13px;background:repeating-linear-gradient(#222 0 1px,transparent 1px 2px);"></div>
<svg style="left:1058px;top:106px;" width="16" height="16" viewBox="0 0 16 16"><path d="M3 7L8 2L14 8L9 13Z" fill="#f4f8ff" stroke="#3060a8" stroke-width="1.1"/><path d="M5 7L8 4L12 8Z" fill="#b8d0f0"/><path d="M8 2Q5 -1 4.500 4" fill="none" stroke="#3060a8"/><path d="M13.500 8Q16 11 14.500 14Q12.500 12 13.500 8Z" fill="#2868c8"/></svg>
<svg style="left:1079px;top:112px;" width="7" height="4" viewBox="0 0 7 4"><path d="M0 0H7L3.5 4Z" fill="#222"/></svg>
<svg style="left:1092px;top:106px;" width="16" height="16" viewBox="0 0 16 16"><path d="M9 8L14 1.500L15.500 3L10.500 9.500Z" fill="#e8b838" stroke="#a07818" stroke-width=".5"/><path d="M5 10Q7 7 9 8L10.500 9.500Q10 12 6 12.500Q2 13.500 1 12Q4 12 5 10Z" fill="#4068c0" stroke="#284890" stroke-width=".5"/></svg>
<svg style="left:1114px;top:112px;" width="7" height="4" viewBox="0 0 7 4"><path d="M0 0H7L3.5 4Z" fill="#222"/></svg>
<svg style="left:1126px;top:106px;" width="16" height="16" viewBox="0 0 16 16"><defs><linearGradient id="gr1"><stop offset="0" stop-color="#f4f4f4"/><stop offset="1" stop-color="#484848"/></linearGradient></defs><rect x="1" y="1" width="13" height="14" fill="url(#gr1)"/></svg>
<svg style="left:1149px;top:112px;" width="7" height="4" viewBox="0 0 7 4"><path d="M0 0H7L3.5 4Z" fill="#a0a0a0"/></svg>
<svg style="left:1162px;top:106px;" width="16" height="16" viewBox="0 0 16 16"><g shape-rendering="crispEdges" fill="#111"><rect x="1" y="2" width="14" height="2"/><rect x="1" y="6.5" width="14" height="3"/><rect x="1" y="12" width="14" height="3"/></g></svg>
<svg style="left:1185px;top:106px;" width="16" height="16" viewBox="0 0 16 16"><g shape-rendering="crispEdges" stroke="#111"><path d="M1 3.500H15" stroke-dasharray="1 1"/><path d="M1 7.500H15" stroke-dasharray="3 1"/><path d="M1 11.500H15" stroke-dasharray="2 1"/><path d="M1 14.500H15" stroke-dasharray="1 2"/></g></svg>
<div style="left:4px;top:130px;width:293px;height:828px;background:#f0f0f0;"></div>
<span class="t" style="left:9px;top:134px;letter-spacing:0.36px">Arbol de Reporte</span>
<div style="left:4px;top:130px;width:293px;height:1px;background:#fafafa;"></div>
<svg style="left:284px;top:135px;" width="9" height="9" viewBox="0 0 9 9"><path d="M1 1L8 8M8 1L1 8" stroke="#111" stroke-width="1.5"/></svg>
<div style="left:4px;top:148px;width:293px;height:323px;background:#fff;"></div>
<svg style="left:12px;top:153px;" width="9" height="7" viewBox="0 0 9 7"><path d="M0.700 1.200L4.500 5L8.300 1.200" fill="none" stroke="#444" stroke-width="1.5"/></svg>
<div style="left:25px;top:149px;width:141px;height:16px;background:#d9d9d9;"></div>
<span class="t" style="left:28.3px;top:152px;letter-spacing:-0.49px">Principal: CMC_CONSULTAS</span>
<span class="t" style="left:47.6px;top:168px;letter-spacing:-0.30px">sbrLinea: CMC_Detalle</span>
<span class="t" style="left:47.6px;top:184px;letter-spacing:-0.26px">sbrMarco: CMC_Detalle</span>
<div style="left:36px;top:165px;width:1px;height:24px;background:repeating-linear-gradient(180deg,#808080 0 1px,transparent 1px 2px);"></div>
<div style="left:37px;top:172px;width:9px;height:1px;background:repeating-linear-gradient(90deg,#808080 0 1px,transparent 1px 2px);"></div>
<div style="left:37px;top:188px;width:9px;height:1px;background:repeating-linear-gradient(90deg,#808080 0 1px,transparent 1px 2px);"></div>
<div style="left:35px;top:322px;width:1px;height:149px;background:repeating-linear-gradient(180deg,#808080 0 1px,transparent 1px 2px);"></div>
<div style="left:54px;top:322px;width:1px;height:149px;background:repeating-linear-gradient(180deg,#808080 0 1px,transparent 1px 2px);"></div>
<div style="left:73px;top:322px;width:1px;height:149px;background:repeating-linear-gradient(180deg,#808080 0 1px,transparent 1px 2px);"></div>
<div style="left:74px;top:331px;width:10px;height:1px;background:repeating-linear-gradient(90deg,#808080 0 1px,transparent 1px 2px);"></div>
<svg style="left:84px;top:323px;" width="16" height="16" viewBox="0 0 16 16"><g shape-rendering="crispEdges" fill="#f4f4f4" stroke="#7a7a7a"><rect x="0.5" y="0.5" width="9" height="6"/><path d="M0.5 2.5H9.5M4.5 2.5V6.5" fill="none"/></g><text x="10" y="15.5" font-family="Liberation Serif" font-weight="bold" font-size="15" text-anchor="middle" fill="#1a1a1a">A</text></svg>
<span class="t" style="left:104.5px;top:326px;letter-spacing:-0.21px">dbtFolio</span>
<div style="left:74px;top:347px;width:10px;height:1px;background:repeating-linear-gradient(90deg,#808080 0 1px,transparent 1px 2px);"></div>
<svg style="left:86px;top:340px;" width="14" height="15" viewBox="0 0 14 15"><text x="6.5" y="12.2" font-family="Liberation Serif" font-weight="bold" font-size="15.5" text-anchor="middle" fill="#2a2a34">A</text></svg>
<span class="t" style="left:104.5px;top:342px;letter-spacing:-0.34px">Label8</span>
<div style="left:74px;top:363px;width:10px;height:1px;background:repeating-linear-gradient(90deg,#808080 0 1px,transparent 1px 2px);"></div>
<svg style="left:86px;top:356px;" width="14" height="15" viewBox="0 0 14 15"><text x="6.5" y="12.2" font-family="Liberation Serif" font-weight="bold" font-size="15.5" text-anchor="middle" fill="#2a2a34">A</text></svg>
<span class="t" style="left:104.5px;top:358px;letter-spacing:-0.34px">Label3</span>
<div style="left:74px;top:379px;width:10px;height:1px;background:repeating-linear-gradient(90deg,#808080 0 1px,transparent 1px 2px);"></div>
<svg style="left:86px;top:372px;" width="14" height="15" viewBox="0 0 14 15"><text x="6.5" y="12.2" font-family="Liberation Serif" font-weight="bold" font-size="15.5" text-anchor="middle" fill="#2a2a34">A</text></svg>
<span class="t" style="left:104.5px;top:374px;letter-spacing:-0.34px">Label5</span>
<div style="left:74px;top:395px;width:10px;height:1px;background:repeating-linear-gradient(90deg,#808080 0 1px,transparent 1px 2px);"></div>
<svg style="left:86px;top:388px;" width="14" height="15" viewBox="0 0 14 15"><text x="6.5" y="12.2" font-family="Liberation Serif" font-weight="bold" font-size="15.5" text-anchor="middle" fill="#2a2a34">A</text></svg>
<span class="t" style="left:104.5px;top:390px;letter-spacing:-0.31px">Label23</span>
<div style="left:74px;top:411px;width:10px;height:1px;background:repeating-linear-gradient(90deg,#808080 0 1px,transparent 1px 2px);"></div>
<svg style="left:86px;top:404px;" width="12" height="14" viewBox="0 0 12 14"><g shape-rendering="crispEdges"><rect x="0.5" y="0.5" width="11" height="13" fill="#fffc90" stroke="#1c3468"/><rect x="1" y="1" width="10" height="3" fill="#2c62b0"/><path d="M3.5 4V13" stroke="#1c3468"/><path d="M5.500 6.500H10M5.500 8.500H10M5.500 10.500H10" stroke="#1c3468"/></g></svg>
<span class="t" style="left:104.5px;top:406px;letter-spacing:-0.34px">sbrLinea</span>
<div style="left:74px;top:427px;width:10px;height:1px;background:repeating-linear-gradient(90deg,#808080 0 1px,transparent 1px 2px);"></div>
<svg style="left:86px;top:420px;" width="14" height="15" viewBox="0 0 14 15"><text x="6.5" y="12.2" font-family="Liberation Serif" font-weight="bold" font-size="15.5" text-anchor="middle" fill="#2a2a34">A</text></svg>
<span class="t" style="left:104.5px;top:422px;letter-spacing:-0.31px">Label13</span>
<div style="left:74px;top:443px;width:10px;height:1px;background:repeating-linear-gradient(90deg,#808080 0 1px,transparent 1px 2px);"></div>
<svg style="left:86px;top:436px;" width="14" height="15" viewBox="0 0 14 15"><text x="6.5" y="12.2" font-family="Liberation Serif" font-weight="bold" font-size="15.5" text-anchor="middle" fill="#2a2a34">A</text></svg>
<span class="t" style="left:104.5px;top:438px;letter-spacing:-0.31px">Label14</span>
<div style="left:74px;top:459px;width:10px;height:1px;background:repeating-linear-gradient(90deg,#808080 0 1px,transparent 1px 2px);"></div>
<div style="left:82px;top:452px;width:96px;height:15px;background:#d9d9d9;"></div>
<svg style="left:86px;top:452px;" width="14" height="15" viewBox="0 0 14 15"><text x="6.5" y="12.2" font-family="Liberation Serif" font-weight="bold" font-size="15.5" text-anchor="middle" fill="#2a2a34">A</text></svg>
<span class="t" style="left:104.5px;top:454px;letter-spacing:-0.37px">lblRemision_01</span>
<div style="left:86px;top:469px;width:14px;height:2px;overflow:hidden;"><svg width="14" height="15" style="left:0;top:0"><text x="6.5" y="12.2" font-family="Liberation Serif" font-weight="bold" font-size="15.5" text-anchor="middle" fill="#2a2a34">A</text></svg></div>
<div style="left:281px;top:324px;width:16px;height:147px;background:#f0f0f0;"></div>
<svg style="left:284.5px;top:330px;" width="9" height="6" viewBox="0 0 9 6"><path d="M0.8 5L4.5 1.5L8.2 5" fill="none" stroke="#404040" stroke-width="1.9"/></svg>
<svg style="left:284.5px;top:459px;" width="9" height="6" viewBox="0 0 9 6"><path d="M0.8 1L4.5 4.500L8.2 1" fill="none" stroke="#404040" stroke-width="1.9"/></svg>
<div style="left:281px;top:355px;width:16px;height:17px;background:#c1c1c1;"></div>
<span class="t" style="left:8.5px;top:480px;letter-spacing:-0.25px">Propiedades para lblRemision_01</span>
<div style="left:5px;top:495px;width:276px;height:463px;background:#fff;"></div>
<div style="left:5px;top:495px;width:16px;height:463px;background:#f0f0f0;"></div>
<div style="left:5px;top:495px;width:276px;height:16px;background:#f0f0f0;"></div>
<div style="left:21px;top:510px;width:260px;height:1px;background:#808080;"></div>
<svg style="left:8px;top:499px;" width="9" height="9" viewBox="0 0 9 9"><g shape-rendering="crispEdges"><rect x="0.500" y="0.500" width="8" height="8" fill="#fff" stroke="#222"/><path d="M2 4.500H7" stroke="#111" fill="none"/></g></svg>
<span class="t b" style="left:21px;top:498px;font-size:11.5px;letter-spacing:-0.08px">Appearance</span>
<div style="left:21px;top:526px;width:260px;height:1px;background:#f0f0f0;"></div>
<svg style="left:24px;top:515px;" width="9" height="9" viewBox="0 0 9 9"><g shape-rendering="crispEdges"><rect x="0.500" y="0.500" width="8" height="8" fill="#fff" stroke="#222"/><path d="M2 4.500H7 M4.500 2V7" stroke="#111" fill="none"/></g></svg>
<span class="t" style="left:36.5px;top:514px;letter-spacing:-0.17px">Border</span>
<div style="left:186.5px;top:511px;width:94.5px;height:15px;overflow:hidden;"><span class="t" style="left:0px;top:3px;letter-spacing:-0.12px">(TppBorder)</span>
</div>
<div style="left:21px;top:542px;width:260px;height:1px;background:#f0f0f0;"></div>
<span class="t" style="left:36.5px;top:530px;letter-spacing:-0.26px">Color</span>
<div style="left:188px;top:529px;width:12px;height:11px;background:#fff;border:1px solid #000;box-sizing:border-box;"></div>
<div style="left:202.5px;top:527px;width:78.5px;height:15px;overflow:hidden;"><span class="t" style="left:0px;top:3px;letter-spacing:-0.15px">clWhite</span>
</div>
<div style="left:21px;top:558px;width:260px;height:1px;background:#f0f0f0;"></div>
<span class="t" style="left:36.5px;top:546px;letter-spacing:-0.17px">HyperLink</span>
<div style="left:21px;top:574px;width:260px;height:1px;background:#f0f0f0;"></div>
<span class="t" style="left:36.5px;top:562px;letter-spacing:-0.22px">HyperlinkColor</span>
<div style="left:188px;top:561px;width:12px;height:11px;background:#0000ff;border:1px solid #000;box-sizing:border-box;"></div>
<div style="left:202.5px;top:559px;width:78.5px;height:15px;overflow:hidden;"><span class="t" style="left:0px;top:3px;letter-spacing:-0.49px">clBlue</span>
</div>
<div style="left:21px;top:590px;width:260px;height:1px;background:#f0f0f0;"></div>
<span class="t" style="left:36.5px;top:578px;letter-spacing:-0.26px">HyperlinkEnabled</span>
<div style="left:189px;top:576px;width:12px;height:12px;background:#fff;border-top:2px solid #000;border-left:2px solid #000;box-sizing:border-box;"></div>
<svg style="left:191px;top:578px;" width="10" height="9" viewBox="0 0 10 9"><path d="M1.500 3.500L3.500 6.200L8.300 1.200" fill="none" stroke="#000" stroke-width="1.900"/></svg>
<div style="left:21px;top:606px;width:260px;height:1px;background:#f0f0f0;"></div>
<span class="t" style="left:36.5px;top:594px;letter-spacing:-0.19px">HyperlinkHint</span>
<div style="left:21px;top:622px;width:260px;height:1px;background:#f0f0f0;"></div>
<span class="t" style="left:36.5px;top:610px;letter-spacing:0.01px">Transparent</span>
<div style="left:189px;top:608px;width:12px;height:12px;background:#fff;border-top:2px solid #000;border-left:2px solid #000;box-sizing:border-box;"></div>
<svg style="left:191px;top:610px;" width="10" height="9" viewBox="0 0 10 9"><path d="M1.500 3.500L3.500 6.200L8.300 1.200" fill="none" stroke="#000" stroke-width="1.900"/></svg>
<span class="t" style="left:36.5px;top:626px;letter-spacing:-0.46px">Visible</span>
<div style="left:189px;top:624px;width:12px;height:12px;background:#fff;border-top:2px solid #000;border-left:2px solid #000;box-sizing:border-box;"></div>
<svg style="left:191px;top:626px;" width="10" height="9" viewBox="0 0 10 9"><path d="M1.500 3.500L3.500 6.200L8.300 1.200" fill="none" stroke="#000" stroke-width="1.900"/></svg>
<div style="left:5px;top:639px;width:276px;height:16px;background:#f0f0f0;"></div>
<div style="left:5px;top:638px;width:276px;height:1px;background:#808080;"></div>
<div style="left:21px;top:654px;width:260px;height:1px;background:#808080;"></div>
<svg style="left:8px;top:643px;" width="9" height="9" viewBox="0 0 9 9"><g shape-rendering="crispEdges"><rect x="0.500" y="0.500" width="8" height="8" fill="#fff" stroke="#222"/><path d="M2 4.500H7" stroke="#111" fill="none"/></g></svg>
<span class="t b" style="left:21px;top:642px;font-size:11.5px;letter-spacing:0.51px">Identity</span>
<span class="t" style="left:36.5px;top:658px;letter-spacing:-0.45px">UserName</span>
<div style="left:186.5px;top:655px;width:94.5px;height:15px;overflow:hidden;"><span class="t" style="left:0px;top:3px;letter-spacing:-0.37px">lblRemision_01</span>
</div>
<div style="left:5px;top:671px;width:276px;height:16px;background:#f0f0f0;"></div>
<div style="left:5px;top:670px;width:276px;height:1px;background:#808080;"></div>
<div style="left:21px;top:686px;width:260px;height:1px;background:#808080;"></div>
<svg style="left:8px;top:675px;" width="9" height="9" viewBox="0 0 9 9"><g shape-rendering="crispEdges"><rect x="0.500" y="0.500" width="8" height="8" fill="#fff" stroke="#222"/><path d="M2 4.500H7" stroke="#111" fill="none"/></g></svg>
<span class="t b" style="left:21px;top:674px;font-size:11.5px;letter-spacing:0.22px">Layout</span>
<div style="left:21px;top:702px;width:260px;height:1px;background:#f0f0f0;"></div>
<span class="t" style="left:36.5px;top:690px;letter-spacing:-0.25px">DesignLayer</span>
<div style="left:186.5px;top:687px;width:94.5px;height:15px;overflow:hidden;"><span class="t" style="left:0px;top:3px;letter-spacing:0.00px">Foreground1</span>
</div>
<div style="left:21px;top:718px;width:260px;height:1px;background:#f0f0f0;"></div>
<span class="t" style="left:36.5px;top:706px;letter-spacing:0.03px">Height</span>
<div style="left:186.5px;top:703px;width:94.5px;height:15px;overflow:hidden;"><span class="t" style="left:0px;top:3px;letter-spacing:-0.38px">16</span>
</div>
<div style="left:21px;top:734px;width:260px;height:1px;background:#f0f0f0;"></div>
<span class="t" style="left:36.5px;top:722px;letter-spacing:0.16px">Left</span>
<div style="left:186.5px;top:719px;width:94.5px;height:15px;overflow:hidden;"><span class="t" style="left:0px;top:3px;letter-spacing:-0.29px">454</span>
</div>
<div style="left:21px;top:750px;width:260px;height:1px;background:#f0f0f0;"></div>
<span class="t" style="left:36.5px;top:738px;letter-spacing:0.08px">Top</span>
<div style="left:186.5px;top:735px;width:94.5px;height:15px;overflow:hidden;"><span class="t" style="left:0px;top:3px;letter-spacing:-0.38px">42</span>
</div>
<span class="t" style="left:36.5px;top:754px;letter-spacing:-0.03px">Width</span>
<div style="left:186.5px;top:751px;width:94.5px;height:15px;overflow:hidden;"><span class="t" style="left:0px;top:3px;letter-spacing:-0.38px">74</span>
</div>
<div style="left:5px;top:767px;width:276px;height:16px;background:#f0f0f0;"></div>
<div style="left:5px;top:766px;width:276px;height:1px;background:#808080;"></div>
<div style="left:21px;top:782px;width:260px;height:1px;background:#808080;"></div>
<svg style="left:8px;top:771px;" width="9" height="9" viewBox="0 0 9 9"><g shape-rendering="crispEdges"><rect x="0.500" y="0.500" width="8" height="8" fill="#fff" stroke="#222"/><path d="M2 4.500H7" stroke="#111" fill="none"/></g></svg>
<span class="t b" style="left:21px;top:770px;font-size:11.5px;letter-spacing:0.20px">Layout - Dynamic</span>
<div style="left:21px;top:798px;width:260px;height:1px;background:#f0f0f0;"></div>
<svg style="left:24px;top:787px;" width="9" height="9" viewBox="0 0 9 9"><g shape-rendering="crispEdges"><rect x="0.500" y="0.500" width="8" height="8" fill="#fff" stroke="#222"/><path d="M2 4.500H7 M4.500 2V7" stroke="#111" fill="none"/></g></svg>
<span class="t" style="left:36.5px;top:786px;letter-spacing:-0.19px">Anchors</span>
<div style="left:186.5px;top:783px;width:94.5px;height:15px;overflow:hidden;"><span class="t" style="left:0px;top:3px;letter-spacing:0.22px">[atLeft, atTop]</span>
</div>
<div style="left:21px;top:814px;width:260px;height:1px;background:#f0f0f0;"></div>
<span class="t" style="left:36.5px;top:802px;letter-spacing:-0.38px">AutoSize</span>
<div style="left:189px;top:800px;width:12px;height:12px;background:#fff;border-top:2px solid #000;border-left:2px solid #000;box-sizing:border-box;"></div>
<div style="left:21px;top:830px;width:260px;height:1px;background:#f0f0f0;"></div>
<span class="t" style="left:36.5px;top:818px;letter-spacing:-0.40px">Ellipsis</span>
<div style="left:189px;top:816px;width:12px;height:12px;background:#fff;border-top:2px solid #000;border-left:2px solid #000;box-sizing:border-box;"></div>
<span class="t" style="left:36.5px;top:834px;letter-spacing:-0.13px">ReprintOnOverFlow</span>
<div style="left:189px;top:832px;width:12px;height:12px;background:#fff;border-top:2px solid #000;border-left:2px solid #000;box-sizing:border-box;"></div>
<div style="left:5px;top:847px;width:276px;height:16px;background:#f0f0f0;"></div>
<div style="left:5px;top:846px;width:276px;height:1px;background:#808080;"></div>
<div style="left:21px;top:862px;width:260px;height:1px;background:#808080;"></div>
<svg style="left:8px;top:851px;" width="9" height="9" viewBox="0 0 9 9"><g shape-rendering="crispEdges"><rect x="0.500" y="0.500" width="8" height="8" fill="#fff" stroke="#222"/><path d="M2 4.500H7" stroke="#111" fill="none"/></g></svg>
<span class="t b" style="left:21px;top:850px;font-size:11.5px;letter-spacing:0.10px">Output - File</span>
<div style="left:21px;top:878px;width:260px;height:1px;background:#f0f0f0;"></div>
<svg style="left:24px;top:867px;" width="9" height="9" viewBox="0 0 9 9"><g shape-rendering="crispEdges"><rect x="0.500" y="0.500" width="8" height="8" fill="#fff" stroke="#222"/><path d="M2 4.500H7 M4.500 2V7" stroke="#111" fill="none"/></g></svg>
<span class="t" style="left:36.5px;top:866px;letter-spacing:-0.25px">FormFieldSettings</span>
<div style="left:186.5px;top:863px;width:94.5px;height:15px;overflow:hidden;"><span class="t" style="left:0px;top:3px;letter-spacing:-0.26px">(TppFormFieldTextS</span>
</div>
<div style="left:21px;top:894px;width:260px;height:1px;background:#f0f0f0;"></div>
<span class="t" style="left:36.5px;top:882px;letter-spacing:-0.27px">Save</span>
<div style="left:189px;top:880px;width:12px;height:12px;background:#fff;border-top:2px solid #000;border-left:2px solid #000;box-sizing:border-box;"></div>
<div style="left:21px;top:910px;width:260px;height:1px;background:#f0f0f0;"></div>
<span class="t" style="left:36.5px;top:898px;letter-spacing:-0.17px">SaveLength</span>
<div style="left:186.5px;top:895px;width:94.5px;height:15px;overflow:hidden;"><span class="t" style="left:0px;top:3px;letter-spacing:-0.62px">0</span>
</div>
<span class="t" style="left:36.5px;top:914px;letter-spacing:-0.24px">SaveOrder</span>
<div style="left:186.5px;top:911px;width:94.5px;height:15px;overflow:hidden;"><span class="t" style="left:0px;top:3px;letter-spacing:-0.14px">-1</span>
</div>
<div style="left:5px;top:927px;width:276px;height:16px;background:#f0f0f0;"></div>
<div style="left:5px;top:926px;width:276px;height:1px;background:#808080;"></div>
<div style="left:21px;top:942px;width:260px;height:1px;background:#808080;"></div>
<svg style="left:8px;top:931px;" width="9" height="9" viewBox="0 0 9 9"><g shape-rendering="crispEdges"><rect x="0.500" y="0.500" width="8" height="8" fill="#fff" stroke="#222"/><path d="M2 4.500H7" stroke="#111" fill="none"/></g></svg>
<span class="t b" style="left:21px;top:930px;font-size:11.5px;letter-spacing:0.80px">Text</span>
<span class="t" style="left:36.5px;top:946px;letter-spacing:-0.23px">Angle</span>
<div style="left:186.5px;top:943px;width:94.5px;height:15px;overflow:hidden;"><span class="t" style="left:0px;top:3px;letter-spacing:-0.62px">0</span>
</div>
<div style="left:186px;top:511px;width:1px;height:15px;background:#f0f0f0;"></div>
<div style="left:21px;top:511px;width:1px;height:16px;background:#808080;"></div>
<div style="left:186px;top:527px;width:1px;height:15px;background:#f0f0f0;"></div>
<div style="left:21px;top:527px;width:1px;height:16px;background:#808080;"></div>
<div style="left:186px;top:543px;width:1px;height:15px;background:#f0f0f0;"></div>
<div style="left:21px;top:543px;width:1px;height:16px;background:#808080;"></div>
<div style="left:186px;top:559px;width:1px;height:15px;background:#f0f0f0;"></div>
<div style="left:21px;top:559px;width:1px;height:16px;background:#808080;"></div>
<div style="left:186px;top:575px;width:1px;height:15px;background:#f0f0f0;"></div>
<div style="left:21px;top:575px;width:1px;height:16px;background:#808080;"></div>
<div style="left:186px;top:591px;width:1px;height:15px;background:#f0f0f0;"></div>
<div style="left:21px;top:591px;width:1px;height:16px;background:#808080;"></div>
<div style="left:186px;top:607px;width:1px;height:15px;background:#f0f0f0;"></div>
<div style="left:21px;top:607px;width:1px;height:16px;background:#808080;"></div>
<div style="left:186px;top:623px;width:1px;height:15px;background:#f0f0f0;"></div>
<div style="left:21px;top:623px;width:1px;height:16px;background:#808080;"></div>
<div style="left:186px;top:655px;width:1px;height:15px;background:#f0f0f0;"></div>
<div style="left:21px;top:655px;width:1px;height:16px;background:#808080;"></div>
<div style="left:186px;top:687px;width:1px;height:15px;background:#f0f0f0;"></div>
<div style="left:21px;top:687px;width:1px;height:16px;background:#808080;"></div>
<div style="left:186px;top:703px;width:1px;height:15px;background:#f0f0f0;"></div>
<div style="left:21px;top:703px;width:1px;height:16px;background:#808080;"></div>
<div style="left:186px;top:719px;width:1px;height:15px;background:#f0f0f0;"></div>
<div style="left:21px;top:719px;width:1px;height:16px;background:#808080;"></div>
<div style="left:186px;top:735px;width:1px;height:15px;background:#f0f0f0;"></div>
<div style="left:21px;top:735px;width:1px;height:16px;background:#808080;"></div>
<div style="left:186px;top:751px;width:1px;height:15px;background:#f0f0f0;"></div>
<div style="left:21px;top:751px;width:1px;height:16px;background:#808080;"></div>
<div style="left:186px;top:783px;width:1px;height:15px;background:#f0f0f0;"></div>
<div style="left:21px;top:783px;width:1px;height:16px;background:#808080;"></div>
<div style="left:186px;top:799px;width:1px;height:15px;background:#f0f0f0;"></div>
<div style="left:21px;top:799px;width:1px;height:16px;background:#808080;"></div>
<div style="left:186px;top:815px;width:1px;height:15px;background:#f0f0f0;"></div>
<div style="left:21px;top:815px;width:1px;height:16px;background:#808080;"></div>
<div style="left:186px;top:831px;width:1px;height:15px;background:#f0f0f0;"></div>
<div style="left:21px;top:831px;width:1px;height:16px;background:#808080;"></div>
<div style="left:186px;top:863px;width:1px;height:15px;background:#f0f0f0;"></div>
<div style="left:21px;top:863px;width:1px;height:16px;background:#808080;"></div>
<div style="left:186px;top:879px;width:1px;height:15px;background:#f0f0f0;"></div>
<div style="left:21px;top:879px;width:1px;height:16px;background:#808080;"></div>
<div style="left:186px;top:895px;width:1px;height:15px;background:#f0f0f0;"></div>
<div style="left:21px;top:895px;width:1px;height:16px;background:#808080;"></div>
<div style="left:186px;top:911px;width:1px;height:15px;background:#f0f0f0;"></div>
<div style="left:21px;top:911px;width:1px;height:16px;background:#808080;"></div>
<div style="left:186px;top:943px;width:1px;height:15px;background:#f0f0f0;"></div>
<div style="left:21px;top:943px;width:1px;height:16px;background:#808080;"></div>
<div style="left:281px;top:495px;width:16px;height:463px;background:#f0f0f0;"></div>
<svg style="left:284.5px;top:501px;" width="9" height="6" viewBox="0 0 9 6"><path d="M0.8 5L4.5 1.5L8.2 5" fill="none" stroke="#404040" stroke-width="1.9"/></svg>
<svg style="left:284.5px;top:946px;" width="9" height="6" viewBox="0 0 9 6"><path d="M0.8 1L4.5 4.500L8.2 1" fill="none" stroke="#404040" stroke-width="1.9"/></svg>
<div style="left:281px;top:511px;width:16px;height:344px;background:#c1c1c1;"></div>
<div style="left:301px;top:129px;width:2px;height:829px;background:#f8f8f8;"></div>
<div style="left:303px;top:131px;width:18px;height:17px;background:#fafafa;"></div>
<div style="left:303px;top:128px;width:932px;height:4px;background:#f6f6f6;"></div>
<svg style="left:304px;top:133px;" width="12" height="14" viewBox="0 0 12 14"><g shape-rendering="crispEdges"><rect x="0.5" y="0.5" width="11" height="13" fill="#fff" stroke="#16263c"/><rect x="1" y="1" width="10" height="2" fill="#2f6aa8"/><path d="M1 3.500H11M3.500 4V13" stroke="#16263c"/><path d="M1 5.500H3M1 7.500H3M1 9.500H3M1 11.500H3M6 5.500H10M6 7.500H10M6 9.500H10M6 11.500H10" stroke="#1f4f8f"/></g></svg>
<div style="left:321px;top:132px;width:915px;height:16px;background:#fff;"></div>
<svg style="left:320px;top:132px;" width="916" height="16" viewBox="0 0 916 16"><g fill="#111" shape-rendering="crispEdges"><rect x="2" y="1" width="1" height="3"/><rect x="12" y="1" width="1" height="3"/><rect x="22" y="1" width="1" height="3"/><rect x="31" y="1" width="1" height="14"/><rect x="41" y="1" width="1" height="3"/><rect x="50" y="1" width="1" height="3"/><rect x="60" y="1" width="1" height="3"/><rect x="70" y="1" width="1" height="3"/><rect x="79" y="1" width="1" height="7"/><rect x="89" y="1" width="1" height="3"/><rect x="98" y="1" width="1" height="3"/><rect x="108" y="1" width="1" height="3"/><rect x="118" y="1" width="1" height="3"/><rect x="127" y="1" width="1" height="14"/><rect x="137" y="1" width="1" height="3"/><rect x="146" y="1" width="1" height="3"/><rect x="156" y="1" width="1" height="3"/><rect x="166" y="1" width="1" height="3"/><rect x="175" y="1" width="1" height="7"/><rect x="185" y="1" width="1" height="3"/><rect x="194" y="1" width="1" height="3"/><rect x="204" y="1" width="1" height="3"/><rect x="214" y="1" width="1" height="3"/><rect x="223" y="1" width="1" height="14"/><rect x="233" y="1" width="1" height="3"/><rect x="242" y="1" width="1" height="3"/><rect x="252" y="1" width="1" height="3"/><rect x="262" y="1" width="1" height="3"/><rect x="271" y="1" width="1" height="7"/><rect x="281" y="1" width="1" height="3"/><rect x="290" y="1" width="1" height="3"/><rect x="300" y="1" width="1" height="3"/><rect x="310" y="1" width="1" height="3"/><rect x="319" y="1" width="1" height="14"/><rect x="329" y="1" width="1" height="3"/><rect x="338" y="1" width="1" height="3"/><rect x="348" y="1" width="1" height="3"/><rect x="358" y="1" width="1" height="3"/><rect x="367" y="1" width="1" height="7"/><rect x="377" y="1" width="1" height="3"/><rect x="386" y="1" width="1" height="3"/><rect x="396" y="1" width="1" height="3"/><rect x="406" y="1" width="1" height="3"/><rect x="415" y="1" width="1" height="14"/><rect x="425" y="1" width="1" height="3"/><rect x="434" y="1" width="1" height="3"/><rect x="444" y="1" width="1" height="3"/><rect x="454" y="1" width="1" height="3"/><rect x="463" y="1" width="1" height="7"/><rect x="473" y="1" width="1" height="3"/><rect x="482" y="1" width="1" height="3"/><rect x="492" y="1" width="1" height="3"/><rect x="502" y="1" width="1" height="3"/><rect x="511" y="1" width="1" height="14"/><rect x="521" y="1" width="1" height="3"/><rect x="530" y="1" width="1" height="3"/><rect x="540" y="1" width="1" height="3"/><rect x="550" y="1" width="1" height="3"/><rect x="559" y="1" width="1" height="7"/><rect x="569" y="1" width="1" height="3"/><rect x="578" y="1" width="1" height="3"/><rect x="588" y="1" width="1" height="3"/><rect x="598" y="1" width="1" height="3"/><rect x="607" y="1" width="1" height="14"/><rect x="617" y="1" width="1" height="3"/><rect x="626" y="1" width="1" height="3"/><rect x="636" y="1" width="1" height="3"/><rect x="646" y="1" width="1" height="3"/><rect x="655" y="1" width="1" height="7"/><rect x="665" y="1" width="1" height="3"/><rect x="674" y="1" width="1" height="3"/><rect x="684" y="1" width="1" height="3"/><rect x="694" y="1" width="1" height="3"/><rect x="703" y="1" width="1" height="14"/><rect x="713" y="1" width="1" height="3"/><rect x="722" y="1" width="1" height="3"/><rect x="732" y="1" width="1" height="3"/><rect x="742" y="1" width="1" height="3"/><rect x="751" y="1" width="1" height="7"/><rect x="761" y="1" width="1" height="3"/><rect x="770" y="1" width="1" height="3"/><rect x="780" y="1" width="1" height="3"/><rect x="790" y="1" width="1" height="3"/><rect x="799" y="1" width="1" height="14"/><rect x="809" y="1" width="1" height="3"/><rect x="818" y="1" width="1" height="3"/><rect x="828" y="1" width="1" height="3"/><rect x="838" y="1" width="1" height="3"/><rect x="847" y="1" width="1" height="7"/><rect x="857" y="1" width="1" height="3"/><rect x="866" y="1" width="1" height="3"/><rect x="876" y="1" width="1" height="3"/><rect x="886" y="1" width="1" height="3"/><rect x="895" y="1" width="1" height="14"/><rect x="905" y="1" width="1" height="3"/></g></svg>
<span class="t" style="left:353.8px;top:138px;font-size:8.5px;color:#000;letter-spacing:-0.23px">0</span>
<span class="t" style="left:449.8px;top:138px;font-size:8.5px;color:#000;letter-spacing:-0.08px">96</span>
<span class="t" style="left:545.8px;top:138px;font-size:8.5px;color:#000;letter-spacing:-0.06px">192</span>
<span class="t" style="left:641.8px;top:138px;font-size:8.5px;color:#000;letter-spacing:-0.06px">288</span>
<span class="t" style="left:737.8px;top:138px;font-size:8.5px;color:#000;letter-spacing:-0.06px">384</span>
<span class="t" style="left:833.8px;top:138px;font-size:8.5px;color:#000;letter-spacing:-0.06px">480</span>
<span class="t" style="left:929.8px;top:138px;font-size:8.5px;color:#000;letter-spacing:-0.06px">576</span>
<span class="t" style="left:1025.8px;top:138px;font-size:8.5px;color:#000;letter-spacing:-0.06px">672</span>
<span class="t" style="left:1121.8px;top:138px;font-size:8.5px;color:#000;letter-spacing:-0.06px">768</span>
<span class="t" style="left:1217.8px;top:138px;font-size:8.5px;color:#000;letter-spacing:-0.06px">864</span>
<div style="left:322px;top:152px;width:913px;height:124px;background:#fff;"></div>
<div class="grid" style="left:346px;top:177px;width:889px;height:99px;"></div>
<div style="left:346px;top:176px;width:889px;height:1px;background:#2f7fc8;"></div>
<div style="left:304px;top:148px;width:14px;height:127px;background:#fff;"></div>
<svg style="left:304px;top:148px;" width="14" height="127" viewBox="0 0 14 127"><g fill="#111" shape-rendering="crispEdges"><rect x="0" y="4" width="3" height="1"/><rect x="0" y="14" width="3" height="1"/><rect x="0" y="23" width="3" height="1"/><rect x="0" y="33" width="14" height="1"/><rect x="0" y="43" width="3" height="1"/><rect x="0" y="52" width="3" height="1"/><rect x="0" y="62" width="3" height="1"/><rect x="0" y="71" width="3" height="1"/><rect x="0" y="81" width="6" height="1"/><rect x="0" y="91" width="3" height="1"/><rect x="0" y="100" width="3" height="1"/><rect x="0" y="110" width="3" height="1"/><rect x="0" y="119" width="3" height="1"/></g></svg>
<span class="t" style="left:310.8px;top:184px;font-size:8.5px;color:#000;">0</span>
<div class="d" style="left:346px;top:176px;width:79px;height:20px;background-color:#ffff00;"></div>
<div class="d" style="left:346px;top:186px;width:79px;height:10px;"></div>
<span class="t i" style="left:347px;top:188px;font-size:8px;color:#000;-webkit-text-stroke:0.25px #222200;letter-spacing:-0.19px">CMC_Consulta</span>
<div class="d" style="left:454px;top:176px;width:146px;height:14px;background-color:#ffff99;"></div>
<span class="t" style="left:454.5px;top:178px;letter-spacing:-0.12px">lblMostrar_contenido_sensible</span>
<div class="d" style="left:346px;top:197px;width:67px;height:13px;background-color:#ffff00;"></div>
<span class="t" style="left:346.5px;top:199px;letter-spacing:-0.40px">lblFecha_Final</span>
<div class="d" style="left:454px;top:197px;width:61px;height:13px;background-color:#ffff00;"></div>
<span class="t" style="left:454.5px;top:199px;letter-spacing:-0.37px">lblHora_Final</span>
<div class="d" style="left:346px;top:209px;width:87px;height:13px;background-color:#ffff99;"></div>
<div style="left:346px;top:209px;width:87px;height:12px;overflow:hidden;"><span class="t b i" style="left:0px;top:2px;font-size:12px;letter-spacing:-0.21px">lblFecha_Inicial</span></div>
<div class="d" style="left:346px;top:221px;width:82px;height:12px;background-color:#fff;"></div>
<span class="t b" style="left:346.5px;top:221px;font-size:11.5px;color:#0808c0;letter-spacing:0.13px">lblHora_Inicial</span>
<div class="d" style="left:346px;top:234px;width:113px;height:14px;background-color:#ffff99;"></div>
<span class="t b" style="left:346.5px;top:236px;font-size:11.5px;letter-spacing:-0.05px">Nombre del almacén</span>
<div class="d" style="left:346px;top:247px;width:105px;height:14px;background-color:#ffff99;"></div>
<span class="t b" style="right:787.5px;top:250px;font-size:11.5px;letter-spacing:0.03px">Almacén:</span>
<div class="d" style="left:454px;top:248px;width:63px;height:13px;background-color:#ffff99;"></div>
<span class="t b" style="left:454.5px;top:250px;font-size:11.5px;color:#e81000;letter-spacing:0.01px">lblAlmacen</span>
<div class="d" style="left:346px;top:262px;width:105px;height:13px;background-color:#ffff99;"></div>
<span class="t b" style="right:787.5px;top:263px;font-size:11.5px;letter-spacing:-0.15px">Línea:</span>
<div class="d" style="left:454px;top:262px;width:95px;height:13px;background-color:#ffff99;"></div>
<span class="t b" style="left:454.5px;top:263px;font-size:11.5px;color:#109010;letter-spacing:-0.02px">lblNombre_Linea</span>
<div class="d" style="left:599px;top:248px;width:61px;height:13px;"></div>
<div class="d" style="left:599px;top:262px;width:61px;height:13px;"></div>
<div class="d" style="left:779px;top:180px;width:143px;height:25px;background-color:#fff;"></div>
<span class="t" style="left:808px;top:183px;font-size:21.5px;transform:scaleX(0.885);transform-origin:0 0;">NOMBRE</span>
<div class="d" style="left:699px;top:204px;width:305px;height:39px;background-color:#fff;"></div>
<span class="t b hv" style="left:699.5px;top:209px;font-size:31px;letter-spacing:0.83px">DELIVERY REPORT</span>
<div class="d" style="left:802px;top:243px;width:97px;height:13px;"></div>
<span class="t" style="left:802.5px;top:244px;letter-spacing:-0.20px">Nombre del Reporte</span>
<div class="d" style="left:1136px;top:203px;width:59px;height:12px;"></div>
<div class="d" style="left:1136px;top:242px;width:59px;height:13px;"></div>
<span class="t" style="left:1136.5px;top:244px;letter-spacing:-0.62px">memNombre</span>
<div style="left:320px;top:275px;width:918px;height:16px;background:#f0f0f0;"></div>
<svg style="left:329px;top:280px;" width="7" height="6" viewBox="0 0 7 6"><path d="M0.300 4.800L3.500 1.300L6.700 4.800" fill="none" stroke="#555" stroke-width="1.100"/></svg>
<span class="t" style="left:341.3px;top:278px;letter-spacing:-0.34px">Título</span>
<div style="left:322px;top:291px;width:913px;height:100px;background:#fff;"></div>
<div class="grid" style="left:346px;top:291px;width:889px;height:100px;"></div>
<div style="left:304px;top:291px;width:14px;height:100px;background:#fff;"></div>
<svg style="left:304px;top:291px;" width="14" height="100" viewBox="0 0 14 100"><g fill="#111" shape-rendering="crispEdges"><rect x="0" y="10" width="3" height="1"/><rect x="0" y="19" width="3" height="1"/><rect x="0" y="29" width="3" height="1"/><rect x="0" y="38" width="3" height="1"/><rect x="0" y="48" width="6" height="1"/><rect x="0" y="58" width="3" height="1"/><rect x="0" y="67" width="3" height="1"/><rect x="0" y="77" width="3" height="1"/><rect x="0" y="86" width="3" height="1"/><rect x="0" y="96" width="14" height="1"/></g></svg>
<span class="t" style="left:310.8px;top:294px;font-size:8.5px;color:#000;">0</span>
<div style="left:346px;top:291px;width:1px;height:85px;background:#2f7fc8;"></div>
<div class="d" style="left:346px;top:291px;width:162px;height:18px;"></div>
<div class="d" style="left:346px;top:311px;width:162px;height:18px;"></div>
<div class="d" style="left:346px;top:331px;width:162px;height:18px;"></div>
<span class="t b hv2" style="right:730.5px;top:293px;font-size:17px;letter-spacing:0.10px">Cliente :</span>
<span class="t b hv2" style="right:730.5px;top:312px;font-size:17px;letter-spacing:-0.20px">Pedido :</span>
<span class="t b hv2" style="right:730.5px;top:332px;font-size:17px;letter-spacing:-0.35px">Fecha compromiso :</span>
<div class="d" style="left:518px;top:291px;width:101px;height:18px;"></div>
<span class="t b hv2" style="left:518.5px;top:293px;font-size:17px;letter-spacing:-0.44px">VE_CLIENTE</span>
<div class="d" style="left:518px;top:311px;width:80px;height:18px;"></div>
<span class="t b hv2" style="left:518.5px;top:312px;font-size:17px;letter-spacing:-0.57px">VE_FOLIO</span>
<div class="d" style="left:518px;top:331px;width:268px;height:18px;"></div>
<span class="t b hv2" style="left:518.5px;top:332px;font-size:17px;letter-spacing:-0.36px">VE_FECHA_VIGENCIA_ENTREGA</span>
<div class="d" style="left:346px;top:371px;width:126px;height:16px;"></div>
<div class="d" style="left:346px;top:374px;width:56px;height:17px;"></div>
<span class="t" style="left:346.5px;top:376px;letter-spacing:-0.35px">sbrLinea: Cl</span>
<div class="d" style="left:472px;top:371px;width:214px;height:16px;"></div>
<span class="t b" style="left:478.3px;top:373px;letter-spacing:0.24px">Artículo</span>
<div class="d" style="left:692px;top:371px;width:47px;height:16px;"></div>
<span class="t b" style="left:693px;top:374px;letter-spacing:0.32px">U.Med.</span>
<div class="d" style="left:743px;top:358px;width:53px;height:29px;"></div>
<span class="t b" style="right:443px;top:360px;letter-spacing:0.12px">Piezas</span>
<span class="t b" style="right:443px;top:374px;letter-spacing:0.20px">pedidas</span>
<div style="left:800px;top:319px;width:75px;height:13px;background:#0000ff;"></div>
<span class="t b" style="left:811.8px;top:321px;font-size:11.5px;color:#ffff00;letter-spacing:-0.44px">lblGpoCol</span>
<div style="left:800px;top:333px;width:1px;height:58px;background:#2f7fc8;"></div>
<div style="left:874px;top:333px;width:1px;height:58px;background:#2f7fc8;"></div>
<div style="left:800px;top:334px;width:75px;height:16px;overflow:hidden;"><span class="t b" style="left:1px;top:2px;letter-spacing:0.38px">Remisión_01</span></div>
<div class="d" style="left:800px;top:350px;width:75px;height:13px;"></div>
<div style="left:800px;top:350px;width:75px;height:13px;overflow:hidden;"><span class="t " style="right:0px;top:1px;letter-spacing:-0.26px">varFechaRemi_01</span></div>
<div class="d" style="left:800px;top:362px;width:75px;height:13px;"></div>
<div style="left:800px;top:362px;width:75px;height:13px;overflow:hidden;"><span class="t " style="right:0px;top:1px;letter-spacing:-0.21px">varFolioRemi_01</span></div>
<div class="d" style="left:800px;top:374px;width:75px;height:13px;"></div>
<div style="left:800px;top:374px;width:75px;height:13px;overflow:hidden;"><span class="t " style="right:1px;top:1px;letter-spacing:-0.03px">varTraza_01</span></div>
<div class="d" style="left:878px;top:333px;width:75px;height:17px;--c:#5a6c88;"></div>
<div style="left:878px;top:334px;width:75px;height:16px;overflow:hidden;"><span class="t b" style="left:1px;top:2px;letter-spacing:0.38px">Remisión_02</span></div>
<div class="d" style="left:878px;top:350px;width:75px;height:13px;"></div>
<div style="left:878px;top:350px;width:75px;height:13px;overflow:hidden;"><span class="t " style="right:0px;top:1px;letter-spacing:-0.26px">varFechaRemi_02</span></div>
<div class="d" style="left:878px;top:362px;width:75px;height:13px;"></div>
<div style="left:878px;top:362px;width:75px;height:13px;overflow:hidden;"><span class="t " style="right:0px;top:1px;letter-spacing:-0.21px">varFolioRemi_02</span></div>
<div class="d" style="left:878px;top:374px;width:75px;height:13px;"></div>
<div style="left:878px;top:374px;width:75px;height:13px;overflow:hidden;"><span class="t " style="right:1px;top:1px;letter-spacing:-0.03px">varTraza_02</span></div>
<div class="d" style="left:956px;top:333px;width:75px;height:17px;--c:#5a6c88;"></div>
<div style="left:956px;top:334px;width:75px;height:16px;overflow:hidden;"><span class="t b" style="left:1px;top:2px;letter-spacing:0.38px">Remisión_03</span></div>
<div class="d" style="left:956px;top:350px;width:75px;height:13px;"></div>
<div style="left:956px;top:350px;width:75px;height:13px;overflow:hidden;"><span class="t " style="right:0px;top:1px;letter-spacing:-0.26px">varFechaRemi_03</span></div>
<div class="d" style="left:956px;top:362px;width:75px;height:13px;"></div>
<div style="left:956px;top:362px;width:75px;height:13px;overflow:hidden;"><span class="t " style="right:0px;top:1px;letter-spacing:-0.21px">varFolioRemi_03</span></div>
<div class="d" style="left:956px;top:374px;width:75px;height:13px;"></div>
<div style="left:956px;top:374px;width:75px;height:13px;overflow:hidden;"><span class="t " style="right:1px;top:1px;letter-spacing:-0.03px">varTraza_03</span></div>
<div class="d" style="left:1034px;top:333px;width:75px;height:17px;--c:#5a6c88;"></div>
<div style="left:1034px;top:334px;width:75px;height:16px;overflow:hidden;"><span class="t b" style="left:1px;top:2px;letter-spacing:0.38px">Remisión_04</span></div>
<div class="d" style="left:1034px;top:350px;width:75px;height:13px;"></div>
<div style="left:1034px;top:350px;width:75px;height:13px;overflow:hidden;"><span class="t " style="right:0px;top:1px;letter-spacing:-0.26px">varFechaRemi_04</span></div>
<div class="d" style="left:1034px;top:362px;width:75px;height:13px;"></div>
<div style="left:1034px;top:362px;width:75px;height:13px;overflow:hidden;"><span class="t " style="right:0px;top:1px;letter-spacing:-0.21px">varFolioRemi_04</span></div>
<div class="d" style="left:1034px;top:374px;width:75px;height:13px;"></div>
<div style="left:1034px;top:374px;width:75px;height:13px;overflow:hidden;"><span class="t " style="right:1px;top:1px;letter-spacing:-0.03px">varTraza_04</span></div>
<div class="d" style="left:1112px;top:333px;width:75px;height:17px;--c:#5a6c88;"></div>
<div style="left:1112px;top:334px;width:75px;height:16px;overflow:hidden;"><span class="t b" style="left:1px;top:2px;letter-spacing:0.38px">Remisión_05</span></div>
<div class="d" style="left:1112px;top:350px;width:75px;height:13px;"></div>
<div style="left:1112px;top:350px;width:75px;height:13px;overflow:hidden;"><span class="t " style="right:0px;top:1px;letter-spacing:-0.26px">varFechaRemi_05</span></div>
<div class="d" style="left:1112px;top:362px;width:75px;height:13px;"></div>
<div style="left:1112px;top:362px;width:75px;height:13px;overflow:hidden;"><span class="t " style="right:0px;top:1px;letter-spacing:-0.21px">varFolioRemi_05</span></div>
<div class="d" style="left:1112px;top:374px;width:75px;height:13px;"></div>
<div style="left:1112px;top:374px;width:75px;height:13px;overflow:hidden;"><span class="t " style="right:1px;top:1px;letter-spacing:-0.03px">varTraza_05</span></div>
<div class="d" style="left:1190px;top:333px;width:48px;height:17px;--c:#5a6c88;"></div>
<div style="left:1190px;top:334px;width:45px;height:16px;overflow:hidden;"><span class="t b" style="left:1px;top:2px;letter-spacing:0.38px">Remisión_06</span></div>
<div class="d" style="left:1190px;top:350px;width:48px;height:13px;"></div>
<div style="left:1190px;top:350px;width:45px;height:13px;overflow:hidden;"><span class="t " style="left:-1px;top:1px;letter-spacing:-0.37px">rFechaRemi_06</span></div>
<div class="d" style="left:1190px;top:362px;width:48px;height:13px;"></div>
<div style="left:1190px;top:362px;width:45px;height:13px;overflow:hidden;"><span class="t " style="left:0px;top:1px;letter-spacing:-0.23px">arFolioRemi_06</span></div>
<div class="d" style="left:1190px;top:374px;width:48px;height:13px;"></div>
<div style="left:1190px;top:374px;width:45px;height:13px;overflow:hidden;"><span class="t " style="left:13px;top:1px;letter-spacing:-0.03px">varTraza_06</span></div>
<div style="left:800px;top:333px;width:435px;height:1px;background:#2f7fc8;"></div>
<div style="left:800px;top:349px;width:435px;height:1px;background:#2f7fc8;"></div>
<svg style="left:794px;top:327px;" width="8" height="8" viewBox="0 0 8 8"><circle cx="4" cy="4" r="2.900" fill="#fff" stroke="#222" stroke-width="1"/></svg>
<svg style="left:833px;top:327px;" width="8" height="8" viewBox="0 0 8 8"><circle cx="4" cy="4" r="2.900" fill="#fff" stroke="#222" stroke-width="1"/></svg>
<svg style="left:873px;top:327px;" width="8" height="8" viewBox="0 0 8 8"><circle cx="4" cy="4" r="2.900" fill="#fff" stroke="#222" stroke-width="1"/></svg>
<svg style="left:794px;top:337.5px;" width="8" height="8" viewBox="0 0 8 8"><circle cx="4" cy="4" r="2.900" fill="#fff" stroke="#222" stroke-width="1"/></svg>
<svg style="left:873px;top:337.5px;" width="8" height="8" viewBox="0 0 8 8"><circle cx="4" cy="4" r="2.900" fill="#fff" stroke="#222" stroke-width="1"/></svg>
<svg style="left:794px;top:347px;" width="8" height="8" viewBox="0 0 8 8"><circle cx="4" cy="4" r="2.900" fill="#fff" stroke="#222" stroke-width="1"/></svg>
<svg style="left:833px;top:347px;" width="8" height="8" viewBox="0 0 8 8"><circle cx="4" cy="4" r="2.900" fill="#fff" stroke="#222" stroke-width="1"/></svg>
<svg style="left:873px;top:347px;" width="8" height="8" viewBox="0 0 8 8"><circle cx="4" cy="4" r="2.900" fill="#fff" stroke="#222" stroke-width="1"/></svg>
<div style="left:320px;top:391px;width:918px;height:16px;background:#f0f0f0;"></div>
<svg style="left:329px;top:396px;" width="7" height="6" viewBox="0 0 7 6"><path d="M0.300 4.800L3.500 1.300L6.700 4.800" fill="none" stroke="#555" stroke-width="1.100"/></svg>
<span class="t" style="left:341.3px;top:394px;letter-spacing:-0.30px">Encabezamiento de Grupo[0]: VE_CLIENTE</span>
<div style="left:322px;top:407px;width:913px;height:17px;background:#fff;"></div>
<div class="grid" style="left:346px;top:407px;width:889px;height:17px;"></div>
<div style="left:304px;top:407px;width:14px;height:17px;background:#fff;"></div>
<svg style="left:304px;top:407px;" width="14" height="17" viewBox="0 0 14 17"><g fill="#111" shape-rendering="crispEdges"><rect x="0" y="10" width="3" height="1"/></g></svg>
<span class="t" style="left:310.8px;top:410px;font-size:8.5px;color:#000;">0</span>
<div class="d" style="left:346px;top:408px;width:49px;height:15px;"></div>
<span class="t" style="left:346.5px;top:410px;letter-spacing:-0.27px">sbrMarco:</span>
<div class="d" style="left:394px;top:408px;width:79px;height:15px;"></div>
<span class="t" style="left:395.5px;top:410px;letter-spacing:-0.56px">AVE_ARTICULO</span>
<div class="d" style="left:477px;top:408px;width:209px;height:15px;"></div>
<span class="t" style="left:478.5px;top:410px;letter-spacing:-0.92px">ART_NOMBRE</span>
<div class="d" style="left:692px;top:408px;width:47px;height:15px;"></div>
<div style="left:692px;top:408px;width:46px;height:15px;overflow:hidden;"><span class="t " style="left:0px;top:2px;letter-spacing:-0.81px">ART_UNIDAD</span></div>
<div class="d" style="left:743px;top:408px;width:52px;height:15px;"></div>
<span class="t" style="left:744px;top:410px;letter-spacing:-0.86px">UNIDADES</span>
<div class="d" style="left:800px;top:408px;width:75px;height:13px;"></div>
<div style="left:800px;top:408px;width:75px;height:13px;overflow:hidden;"><span class="t " style="right:0px;top:2px;letter-spacing:-0.18px">varRemision_01</span></div>
<div class="d" style="left:878px;top:407px;width:75px;height:13px;"></div>
<div style="left:878px;top:407px;width:75px;height:13px;overflow:hidden;"><span class="t " style="right:0px;top:2px;letter-spacing:-0.18px">varRemision_02</span></div>
<div class="d" style="left:956px;top:407px;width:75px;height:13px;"></div>
<div style="left:956px;top:407px;width:75px;height:13px;overflow:hidden;"><span class="t " style="right:0px;top:2px;letter-spacing:-0.18px">varRemision_03</span></div>
<div class="d" style="left:1034px;top:407px;width:75px;height:13px;"></div>
<div style="left:1034px;top:407px;width:75px;height:13px;overflow:hidden;"><span class="t " style="right:0px;top:2px;letter-spacing:-0.18px">varRemision_04</span></div>
<div class="d" style="left:1112px;top:407px;width:75px;height:13px;"></div>
<div style="left:1112px;top:407px;width:75px;height:13px;overflow:hidden;"><span class="t " style="right:0px;top:2px;letter-spacing:-0.18px">varRemision_05</span></div>
<div class="d" style="left:1190px;top:407px;width:48px;height:13px;"></div>
<div style="left:1190px;top:407px;width:45px;height:13px;overflow:hidden;"><span class="t " style="left:-2px;top:2px;letter-spacing:-0.18px">varRemision_06</span></div>
<div style="left:800px;top:407px;width:1px;height:14px;background:#2f7fc8;"></div>
<div style="left:874px;top:407px;width:1px;height:14px;background:#2f7fc8;"></div>
<div style="left:320px;top:424px;width:918px;height:16px;background:#f0f0f0;"></div>
<svg style="left:329px;top:429px;" width="7" height="6" viewBox="0 0 7 6"><path d="M0.300 4.800L3.500 1.300L6.700 4.800" fill="none" stroke="#555" stroke-width="1.100"/></svg>
<span class="t" style="left:341.3px;top:427px;letter-spacing:-0.18px">Detalle</span>
<div style="left:320px;top:440px;width:918px;height:16px;background:#f0f0f0;"></div>
<svg style="left:329px;top:445px;" width="7" height="6" viewBox="0 0 7 6"><path d="M0.300 4.800L3.500 1.300L6.700 4.800" fill="none" stroke="#555" stroke-width="1.100"/></svg>
<span class="t" style="left:341.3px;top:443px;letter-spacing:-0.33px">Pie de Grupo[0]: VE_CLIENTE</span>
<div style="left:322px;top:456px;width:913px;height:68px;background:#fff;"></div>
<div class="grid" style="left:346px;top:457px;width:889px;height:67px;"></div>
<div style="left:304px;top:456px;width:14px;height:68px;background:#fff;"></div>
<svg style="left:304px;top:456px;" width="14" height="68" viewBox="0 0 14 68"><g fill="#111" shape-rendering="crispEdges"><rect x="0" y="10" width="3" height="1"/><rect x="0" y="20" width="3" height="1"/><rect x="0" y="29" width="3" height="1"/><rect x="0" y="39" width="3" height="1"/><rect x="0" y="48" width="6" height="1"/><rect x="0" y="58" width="3" height="1"/><rect x="0" y="35" width="14" height="1"/></g></svg>
<span class="t" style="left:310.8px;top:460px;font-size:8.5px;color:#000;">0</span>
<div style="left:346px;top:456px;width:1px;height:68px;background:#2f7fc8;"></div>
<div class="d" style="left:358px;top:456px;width:113px;height:16px;"></div>
<span class="t b" style="left:358.5px;top:458px;letter-spacing:-0.26px">TOTALES</span>
<div class="d" style="left:477px;top:456px;width:160px;height:16px;"></div>
<span class="t b" style="left:478.5px;top:458px;letter-spacing:0.17px">Recuento(ART_NOMBRE)</span>
<div class="d" style="left:743px;top:456px;width:52px;height:16px;"></div>
<div style="left:743px;top:456px;width:52px;height:16px;overflow:hidden;"><span class="t b" style="right:1px;top:2px;letter-spacing:0.07px">ar(UNIDADES)</span></div>
<div class="d" style="left:366px;top:479px;width:172px;height:14px;"></div>
<span class="t b" style="left:366.7px;top:481px;font-size:11.5px;letter-spacing:0.44px">jueves 04/julio/2024 18:47:25</span>
<div class="d" style="left:366px;top:498px;width:214px;height:19px;"></div>
<div style="left:366px;top:498px;width:168px;height:18px;background:#ffff00;"></div>
<span class="t" style="left:366.5px;top:500px;font-size:17px;letter-spacing:0.01px">04/julio/2024 18:47:25</span>
<div class="d" style="left:826px;top:480px;width:53px;height:13px;"></div>
<span class="t b" style="left:827px;top:481px;letter-spacing:-0.00px">USUARIO</span>
<div class="d" style="left:810px;top:491px;width:81px;height:11px;"></div>
<span class="t" style="left:811px;top:493px;font-size:8px;letter-spacing:0.11px">CREACION_FIRMAR</span>
<div class="d" style="left:814px;top:500px;width:66px;height:11px;"></div>
<span class="t" style="left:815.5px;top:501px;font-size:8px;letter-spacing:1.13px">IMSPI_MODU</span>
<div class="d" style="left:751px;top:485px;width:201px;height:39px;"></div>
<span class="t b hv" style="left:751px;top:491px;font-size:31px;letter-spacing:1.09px">OTRO_REG2</span>
<div style="left:320px;top:524px;width:918px;height:16px;background:#f0f0f0;"></div>
<svg style="left:329px;top:529px;" width="7" height="6" viewBox="0 0 7 6"><path d="M0.300 4.800L3.500 1.300L6.700 4.800" fill="none" stroke="#555" stroke-width="1.100"/></svg>
<span class="t" style="left:341.3px;top:527px;letter-spacing:-0.51px">Resumen</span>
<div style="left:322px;top:540px;width:913px;height:24px;background:#fff;"></div>
<div style="left:1235px;top:149px;width:3px;height:416px;background:#f0f0f0;"></div>
<div style="left:322px;top:564px;width:913px;height:357px;background:#a0a0a0;"></div>
<div style="left:322px;top:921px;width:913px;height:17px;background:#f0f0f0;"></div>
<div style="left:339px;top:922px;width:287px;height:15px;background:#c1c1c1;"></div>
<svg style="left:327px;top:925px;" width="7" height="9" viewBox="0 0 7 9"><path d="M5.500 1L1.800 4.500L5.500 8" fill="none" stroke="#404040" stroke-width="1.900"/></svg>
<svg style="left:1223px;top:925px;" width="7" height="9" viewBox="0 0 7 9"><path d="M1.500 1L5.200 4.500L1.500 8" fill="none" stroke="#404040" stroke-width="1.900"/></svg>
<div style="left:298px;top:938px;width:937px;height:1px;background:#fff;"></div>
<div style="left:298px;top:938px;width:9px;height:1px;background:#8c8c8c;"></div>
<div style="left:452px;top:938px;width:783px;height:1px;background:#8c8c8c;"></div>
<div style="left:298px;top:939px;width:937px;height:19px;background:#fff;"></div>
<div style="left:297px;top:495px;width:1px;height:463px;background:#fff;"></div>
<svg style="left:303px;top:939px;" width="400" height="18" viewBox="0 0 400 18"><path d="M3.500 0L8.500 15.500H144.500L149.500 0M144.500 15.500L149.500 0M149.500 0L144.500 15.500H262.500L267.500 0M267.500 0L262.500 15.500H384.500L389.500 0" fill="none" stroke="#666" stroke-width="0.9"/></svg>
<span class="t" style="left:312.2px;top:942px;letter-spacing:-0.49px">Principal: CMC_CONSULTAS</span>
<span class="t" style="left:455.3px;top:942px;letter-spacing:-0.29px">sbrLinea: CMC_Detalle</span>
<span class="t" style="left:573.5px;top:942px;letter-spacing:-0.27px">sbrMarco: CMC_Detalle</span>
<div style="left:0px;top:960px;width:1238px;height:24px;background:#f0f0f0;"></div>
<span class="t" style="left:1px;top:969px;letter-spacing:-0.17px">Objeto: lblRemision_01</span>
<div style="left:663px;top:964px;width:1px;height:20px;background:#a8a8a8;"></div>
<div style="left:754px;top:964px;width:1px;height:20px;background:#a8a8a8;"></div>
<div style="left:843px;top:964px;width:1px;height:20px;background:#a8a8a8;"></div>
<div style="left:934px;top:964px;width:1px;height:20px;background:#a8a8a8;"></div>
<div style="left:1024px;top:964px;width:1px;height:20px;background:#a8a8a8;"></div>
<span class="t" style="left:669px;top:969px;letter-spacing:-0.00px">Izquierda: 454</span>
<span class="t" style="left:759.5px;top:969px;letter-spacing:-0.07px">Arriba: 42</span>
<span class="t" style="left:848.8px;top:969px;letter-spacing:-0.06px">Ancho: 74</span>
<span class="t" style="left:938.8px;top:969px;letter-spacing:-0.01px">Altura: 16</span>
<span class="t" style="left:1029.5px;top:969px;letter-spacing:-0.04px">100%</span>
<div style="left:1075px;top:970px;width:137px;height:9px;background:#e6e6e6;border:1px solid #d0d0d0;box-sizing:border-box;"></div>
<svg style="left:1089px;top:967px;" width="8" height="13" viewBox="0 0 8 13"><path d="M0 3L4 0L8 3V13H0Z" fill="#0a78d7"/></svg>
</body></html>
